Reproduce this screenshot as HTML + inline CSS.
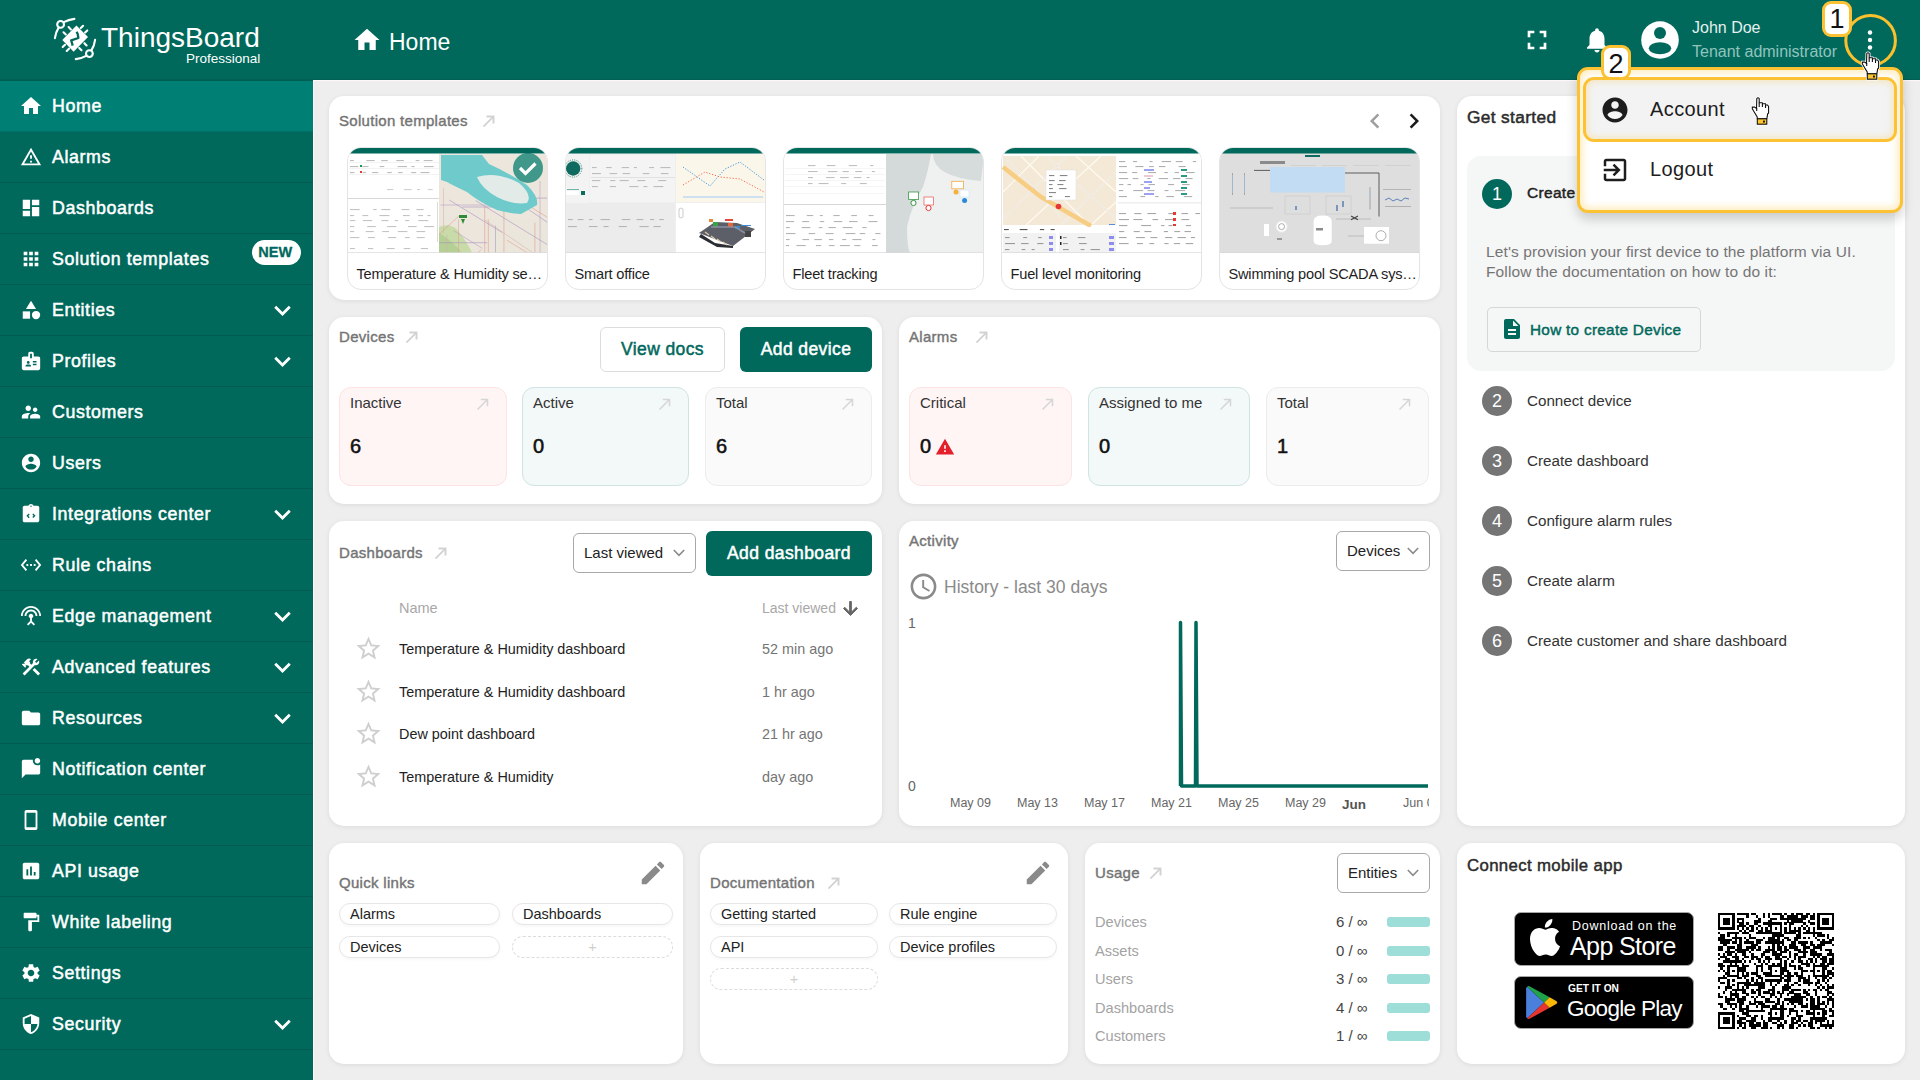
<!DOCTYPE html>
<html><head><meta charset="utf-8">
<style>
*{box-sizing:border-box;margin:0;padding:0}
html,body{width:1920px;height:1080px;overflow:hidden;font-family:"Liberation Sans",sans-serif;background:#eeeeee;position:relative}
.abs{position:absolute}
svg{display:block}
#hdr{position:absolute;left:0;top:0;width:1920px;height:80px;background:#00695c}
#side{position:absolute;left:0;top:80px;width:313px;height:1000px;background:#00695c}
.si{position:absolute;left:0;width:313px;height:52px;border-bottom:1px solid rgba(0,0,0,0.13);color:#fff;font-size:17.8px;font-weight:normal;-webkit-text-stroke:0.5px #fff;letter-spacing:0.62px}
.si.act{background:#008074}
.si svg.ic{position:absolute;left:20px;top:15px;width:22px;height:22px;fill:#fff}
.si span{position:absolute;left:52px;top:16px;line-height:20px;white-space:nowrap}
.si svg.chev{position:absolute;left:265.5px;top:10px;width:33px;height:33px;fill:#fff}
.card{position:absolute;background:#fff;border-radius:15px;box-shadow:0 1px 5px rgba(0,0,0,0.08)}
.newb{position:absolute;left:252px;top:6.5px;width:49px;height:25px;border-radius:13px;background:#fff;color:#00695c;-webkit-text-stroke:0.3px #00695c;letter-spacing:0px;font-size:14.5px;font-weight:bold;text-align:center;line-height:25.5px;padding-right:2.5px}
.ttl{position:absolute;font-size:15px;font-weight:normal;-webkit-text-stroke:0.4px #747474;letter-spacing:0.3px;color:#747474;white-space:nowrap;line-height:18px}
.ttl.dk{color:#2b2b2b}
.arr{position:absolute;width:18px;height:18px;fill:#cfcfcf;stroke:#d6d6d6;stroke-width:0.6}
.txt{position:absolute;white-space:nowrap}
.btn{position:absolute;border-radius:6px;font-size:17.5px;font-weight:normal;-webkit-text-stroke:0.5px currentColor;letter-spacing:0.4px;text-align:center;white-space:nowrap}
.btn.fill{background:#00695c;color:#fff}
.btn.out{background:#fff;color:#00695c;border:1px solid #dcdcdc}
.stat{position:absolute;border-radius:12px;border:1px solid #ececec;background:#fafafa}
.stat.red{background:#fff5f5;border-color:#fde3e3}
.stat.tl{background:#f3f8f8;border-color:#cfe4e2}
.stat .lb{position:absolute;left:10px;top:6px;font-size:15px;line-height:18px;color:#333;white-space:nowrap}
.stat .vl{position:absolute;left:10px;top:45.5px;font-size:20px;line-height:24px;color:#111;-webkit-text-stroke:0.55px #111;white-space:nowrap}
.stat svg{position:absolute;right:14px;top:7px;width:18px;height:18px;fill:#d6d6d6}
.sel{position:absolute;border:1px solid #a8a8a8;border-radius:6px;background:#fff;font-size:15px;color:#222;white-space:nowrap}
.sel span{position:absolute;left:10px;top:50%;transform:translateY(-50%);line-height:18px}
.sel svg{position:absolute;right:10px;top:50%;margin-top:-4px;width:12px;height:8px}
.chip{position:absolute;height:22px;border:1px solid #e6e6e6;border-radius:11px;background:#fff;font-size:14.5px;line-height:20px;color:#222;padding-left:10px;white-space:nowrap;box-shadow:0 2px 3px rgba(0,0,0,0.03)}
.chip.dash{border:1.5px dashed #dcdcdc;color:#cfcfcf;text-align:center;padding-left:0;box-shadow:none}
.tcard{position:absolute;top:147px;width:201px;height:143px;border:1px solid #e4e4e4;border-radius:14px;overflow:hidden;background:#fff}
.tcard > svg{left:-1px!important;top:-1px!important}
.tname{position:absolute;left:8.5px;top:117px;letter-spacing:-0.2px;font-size:14.6px;line-height:18px;color:#1e1e1e;white-space:nowrap}

.si.act svg.ic{left:19px;top:13.5px;width:24px;height:24px}

</style></head><body>
<div id="hdr">
<svg class="abs" style="left:50px;top:14px;width:50px;height:50px" viewBox="0 0 50 50" fill="none" stroke="#fff" stroke-width="2.1" stroke-linecap="round">
<circle cx="10.6" cy="10.4" r="3.4"/><circle cx="39.4" cy="39.6" r="3.4"/>
<path d="M13.8 8.2 Q18.5 5.6 24.4 4.9"/><path d="M8.6 13.6 Q5.6 18.5 4.9 24.2"/>
<path d="M41.4 36.4 Q44.4 31.5 45.1 25.8"/><path d="M36.2 41.8 Q31.5 44.4 25.8 45.1"/>
<path d="M18.6 13.1 L20.9 15.4 M13.5 18.3 L15.8 20.5 M33.1 11.8 L30.8 14.1 M37.3 16.4 L35.1 18.6 M12.7 33.1 L15 30.8 M16.7 37 L19 34.7 M36.6 31.5 L34.4 29.2 M31.5 36.3 L29.2 34"/>
<polygon points="26.4,11.6 38,23.1 23.6,37.7 12.3,25.9" fill="#fff" stroke="none"/>
<path d="M22.7 31.6 L21.2 26.4 L28.4 24 L27.7 20 L26.6 17.8" stroke="#00695c" stroke-width="2.3" stroke-linecap="butt" stroke-linejoin="round"/>
</svg>
<div class="abs" id="tbname" style="left:101px;top:20px;font-size:28px;line-height:36px;color:#fff;white-space:nowrap">ThingsBoard</div>
<div class="abs" id="tbpro" style="left:186px;top:50.5px;font-size:13.5px;line-height:15px;color:#fff;white-space:nowrap">Professional</div>
<svg class="abs" style="left:352px;top:25px;width:30px;height:30px;fill:#fff" viewBox="0 0 24 24"><path d="M10 20v-6h4v6h5v-8h3L12 3 2 12h3v8z"/></svg>
<div class="abs" id="htitle" style="left:389px;top:28.5px;font-size:23px;line-height:26px;color:#fff;white-space:nowrap">Home</div>
<svg class="abs" style="left:1521px;top:24px;width:32px;height:32px;fill:#fff" viewBox="0 0 24 24"><path d="M7 14H5v5h5v-2H7v-3zm-2-4h2V7h3V5H5v5zm12 7h-3v2h5v-5h-2v3zM14 5v2h3v3h2V5h-5z"/></svg>
<svg class="abs" style="left:1582px;top:25px;width:30px;height:30px;fill:#fff" viewBox="0 0 24 24"><path d="M12 22c1.1 0 2-.9 2-2h-4c0 1.1.89 2 2 2zm6-6v-5c0-3.07-1.64-5.64-4.5-6.32V4c0-.83-.67-1.5-1.5-1.5s-1.5.67-1.5 1.5v.68C7.63 5.36 6 7.92 6 11v5l-2 2v1h16v-1l-2-2z"/></svg>
<svg class="abs" style="left:1641px;top:21px;width:38px;height:38px" viewBox="0 0 38 38"><circle cx="19" cy="19" r="18.8" fill="#fff"/><circle cx="19" cy="12.1" r="6" fill="#00695c"/><ellipse cx="19" cy="27.2" rx="11.2" ry="6" fill="#00695c"/></svg>
<div class="abs" id="jd" style="left:1692px;top:18px;font-size:16px;line-height:19px;color:#e6f0ee;white-space:nowrap">John Doe</div>
<div class="abs" id="ta" style="left:1692px;top:42px;font-size:16px;line-height:19px;color:#92c4bc;white-space:nowrap">Tenant administrator</div>
<svg class="abs" style="left:1858px;top:28px;width:24px;height:24px;fill:#fff" viewBox="0 0 24 24"><circle cx="12" cy="4.5" r="2.2"/><circle cx="12" cy="12" r="2.2"/><circle cx="12" cy="19.5" r="2.2"/></svg>
</div>
<div id="side">
<div class="si act" style="top:0px"><svg class="ic" viewBox="0 0 24 24"><path d="M10 20v-6h4v6h5v-8h3L12 3 2 12h3v8z"/></svg><span>Home</span></div>
<div class="si" style="top:51px"><svg class="ic" viewBox="0 0 24 24"><path d="M12 5.99L19.53 19H4.47L12 5.99M12 2L1 21h22L12 2zm1 14h-2v2h2v-2zm0-6h-2v4h2v-4z"/></svg><span>Alarms</span></div>
<div class="si" style="top:102px"><svg class="ic" viewBox="0 0 24 24"><path d="M3 13h8V3H3v10zm0 8h8v-6H3v6zm10 0h8V11h-8v10zm0-18v6h8V3h-8z"/></svg><span>Dashboards</span></div>
<div class="si" style="top:153px"><svg class="ic" viewBox="0 0 24 24"><path d="M4 8h4V4H4v4zm6 12h4v-4h-4v4zm-6 0h4v-4H4v4zm0-6h4v-4H4v4zm6 0h4v-4h-4v4zm6-10v4h4V4h-4zm-6 4h4V4h-4v4zm6 6h4v-4h-4v4zm0 6h4v-4h-4v4z"/></svg><span>Solution templates</span><div class="newb">NEW</div></div>
<div class="si" style="top:204px"><svg class="ic" viewBox="0 0 24 24"><path d="M12 2l-5.5 9h11z"/><circle cx="17.5" cy="17.5" r="4.5"/><path d="M3 13.5h8v8H3z"/></svg><span>Entities</span><svg class="chev" viewBox="0 0 24 24"><path d="M16.59 8.59L12 13.17 7.41 8.59 6 10l6 6 6-6z"/></svg></div>
<div class="si" style="top:255px"><svg class="ic" viewBox="0 0 24 24"><path d="M20 7h-5V4c0-1.1-.9-2-2-2h-2c-1.1 0-2 .9-2 2v3H4c-1.1 0-2 .9-2 2v11c0 1.1.9 2 2 2h16c1.1 0 2-.9 2-2V9c0-1.1-.9-2-2-2zM9 12c.83 0 1.5.67 1.5 1.5S9.83 15 9 15s-1.5-.67-1.5-1.5S8.17 12 9 12zm3 6H6v-.43c0-.6.36-1.15.92-1.39.64-.28 1.34-.43 2.08-.43s1.44.15 2.08.43c.55.24.92.78.92 1.39V18zm1-9h-2V4h2v5zm5 7.5h-4V15h4v1.5zm0-3h-4V12h4v1.5z"/></svg><span>Profiles</span><svg class="chev" viewBox="0 0 24 24"><path d="M16.59 8.59L12 13.17 7.41 8.59 6 10l6 6 6-6z"/></svg></div>
<div class="si" style="top:306px"><svg class="ic" viewBox="0 0 24 24"><path d="M16.5 12c1.38 0 2.49-1.12 2.49-2.5S17.88 7 16.5 7C15.12 7 14 8.12 14 9.5s1.12 2.5 2.5 2.5zM9 11c1.66 0 2.99-1.34 2.99-3S10.66 5 9 5C7.34 5 6 6.34 6 8s1.34 3 3 3zm7.5 3c-1.83 0-5.5.92-5.5 2.75V19h11v-2.25c0-1.83-3.67-2.75-5.5-2.75zM9 13c-2.33 0-7 1.17-7 3.5V19h7v-2.25c0-.85.33-2.34 2.37-3.47C10.5 13.1 9.66 13 9 13z"/></svg><span>Customers</span></div>
<div class="si" style="top:357px"><svg class="ic" viewBox="0 0 24 24"><path d="M12 2C6.48 2 2 6.48 2 12s4.48 10 10 10 10-4.48 10-10S17.52 2 12 2zm0 3c1.66 0 3 1.34 3 3s-1.34 3-3 3-3-1.34-3-3 1.34-3 3-3zm0 14.2c-2.5 0-4.71-1.28-6-3.22.03-1.99 4-3.08 6-3.08 1.99 0 5.97 1.09 6 3.08-1.29 1.94-3.5 3.22-6 3.22z"/></svg><span>Users</span></div>
<div class="si" style="top:408px"><svg class="ic" viewBox="0 0 24 24"><path d="M19 3h-4.18C14.4 1.84 13.3 1 12 1s-2.4.84-2.82 2H5c-1.1 0-2 .9-2 2v14c0 1.1.9 2 2 2h14c1.1 0 2-.9 2-2V5c0-1.1-.9-2-2-2zm-7-.25c.41 0 .75.34.75.75s-.34.75-.75.75-.75-.34-.75-.75.34-.75.75-.75zM9.5 16.5L7 14l2.5-2.5 1.06 1.06L9.12 14l1.44 1.44L9.5 16.5zm5-.06l-1.06-1.06L14.88 14l-1.44-1.44L14.5 11.5 17 14l-2.5 2.44z"/></svg><span>Integrations center</span><svg class="chev" viewBox="0 0 24 24"><path d="M16.59 8.59L12 13.17 7.41 8.59 6 10l6 6 6-6z"/></svg></div>
<div class="si" style="top:459px"><svg class="ic" viewBox="0 0 24 24"><path d="M7.77 6.76L6.23 5.48.82 12l5.41 6.52 1.54-1.28L3.42 12l4.35-5.24zM7 13h2v-2H7v2zm10-2h-2v2h2v-2zm-6 2h2v-2h-2v2zm6.77-7.52l-1.54 1.28L20.58 12l-4.35 5.24 1.54 1.28L23.18 12l-5.41-6.52z"/></svg><span>Rule chains</span></div>
<div class="si" style="top:510px"><svg class="ic" viewBox="0 0 24 24"><path d="M12 5c-3.87 0-7 3.13-7 7h2c0-2.76 2.24-5 5-5s5 2.24 5 5h2c0-3.87-3.13-7-7-7zm1 9.29c.88-.39 1.5-1.26 1.5-2.29 0-1.38-1.12-2.5-2.5-2.5S9.5 10.62 9.5 12c0 1.02.62 1.9 1.5 2.29v3.3L7.59 21 9 22.41l3-3 3 3L16.41 21 13 17.59v-3.3zM12 1C5.93 1 1 5.93 1 12h2c0-4.97 4.03-9 9-9s9 4.03 9 9h2c0-6.07-4.93-11-11-11z"/></svg><span>Edge management</span><svg class="chev" viewBox="0 0 24 24"><path d="M16.59 8.59L12 13.17 7.41 8.59 6 10l6 6 6-6z"/></svg></div>
<div class="si" style="top:561px"><svg class="ic" viewBox="0 0 24 24"><path d="M13.78 15.17l2.12-2.12 6 6-2.12 2.12zM17.5 10c1.93 0 3.5-1.57 3.5-3.5 0-.58-.16-1.12-.41-1.6l-2.7 2.7-1.49-1.49 2.7-2.7c-.48-.25-1.02-.41-1.6-.41C15.57 3 14 4.57 14 6.5c0 .41.08.8.21 1.16l-1.85 1.85-1.78-1.78.71-.71-1.41-1.41L12 3.49c-1.17-1.17-3.07-1.17-4.24 0L4.22 7.03l1.41 1.41H2.81l-.71.71 3.54 3.54.71-.71V9.15l1.41 1.41.71-.71 1.78 1.78-7.41 7.41 2.12 2.12L16.34 9.79c.36.13.75.21 1.16.21z"/></svg><span>Advanced features</span><svg class="chev" viewBox="0 0 24 24"><path d="M16.59 8.59L12 13.17 7.41 8.59 6 10l6 6 6-6z"/></svg></div>
<div class="si" style="top:612px"><svg class="ic" viewBox="0 0 24 24"><path d="M10 4H4c-1.1 0-1.99.9-1.99 2L2 18c0 1.1.9 2 2 2h16c1.1 0 2-.9 2-2V8c0-1.1-.9-2-2-2h-8l-2-2z"/></svg><span>Resources</span><svg class="chev" viewBox="0 0 24 24"><path d="M16.59 8.59L12 13.17 7.41 8.59 6 10l6 6 6-6z"/></svg></div>
<div class="si" style="top:663px"><svg class="ic" viewBox="0 0 24 24"><path d="M22 6.98V16c0 1.1-.9 2-2 2H6l-4 4V4c0-1.1.9-2 2-2h10.1c-.06.32-.1.66-.1 1 0 2.76 2.24 5 5 5 1.13 0 2.16-.39 3-1.02zM16 3c0 1.66 1.34 3 3 3s3-1.34 3-3-1.34-3-3-3-3 1.34-3 3z"/></svg><span>Notification center</span></div>
<div class="si" style="top:714px"><svg class="ic" viewBox="0 0 24 24"><path d="M17 1.01L7 1c-1.1 0-2 .9-2 2v18c0 1.1.9 2 2 2h10c1.1 0 2-.9 2-2V3c0-1.1-.9-1.99-2-1.99zM17 20H7V4h10v16z"/></svg><span>Mobile center</span></div>
<div class="si" style="top:765px"><svg class="ic" viewBox="0 0 24 24"><path d="M19 3H5c-1.1 0-2 .9-2 2v14c0 1.1.9 2 2 2h14c1.1 0 2-.9 2-2V5c0-1.1-.9-2-2-2zM9 17H7v-7h2v7zm4 0h-2V7h2v10zm4 0h-2v-4h2v4z"/></svg><span>API usage</span></div>
<div class="si" style="top:816px"><svg class="ic" viewBox="0 0 24 24"><path d="M18 4V3c0-.55-.45-1-1-1H5c-.55 0-1 .45-1 1v4c0 .55.45 1 1 1h12c.55 0 1-.45 1-1V6h1v4H9v11c0 .55.45 1 1 1h2c.55 0 1-.45 1-1v-9h8V4h-3z"/></svg><span>White labeling</span></div>
<div class="si" style="top:867px"><svg class="ic" viewBox="0 0 24 24"><path d="M19.14 12.94c.04-.3.06-.61.06-.94 0-.32-.02-.64-.07-.94l2.03-1.58c.18-.14.23-.41.12-.61l-1.92-3.32c-.12-.22-.37-.29-.59-.22l-2.39.96c-.5-.38-1.03-.7-1.62-.94l-.36-2.54c-.04-.24-.24-.41-.48-.41h-3.84c-.24 0-.43.17-.47.41l-.36 2.54c-.59.24-1.13.57-1.62.94l-2.39-.96c-.22-.08-.47 0-.59.22L2.74 8.87c-.12.21-.08.47.12.61l2.03 1.58c-.05.3-.09.63-.09.94s.02.64.07.94l-2.03 1.58c-.18.14-.23.41-.12.61l1.92 3.32c.12.22.37.29.59.22l2.39-.96c.5.38 1.03.7 1.62.94l.36 2.54c.05.24.24.41.48.41h3.84c.24 0 .44-.17.47-.41l.36-2.54c.59-.24 1.13-.56 1.62-.94l2.39.96c.22.08.47 0 .59-.22l1.92-3.32c.12-.22.07-.47-.12-.61l-2.01-1.58zM12 15.6c-1.98 0-3.6-1.62-3.6-3.6s1.62-3.6 3.6-3.6 3.6 1.62 3.6 3.6-1.62 3.6-3.6 3.6z"/></svg><span>Settings</span></div>
<div class="si" style="top:918px"><svg class="ic" viewBox="0 0 24 24"><path d="M12 1L3 5v6c0 5.55 3.84 10.74 9 12 5.16-1.26 9-6.45 9-12V5l-9-4zm0 10.99h7c-.53 4.12-3.28 7.79-7 8.94V12H5V6.3l7-3.11v8.8z"/></svg><span>Security</span><svg class="chev" viewBox="0 0 24 24"><path d="M16.59 8.59L12 13.17 7.41 8.59 6 10l6 6 6-6z"/></svg></div>
</div>
<div class="abs" style="left:0;top:79px;width:1920px;height:1px;background:rgba(0,0,0,0.10)"></div>
<div class="abs" style="left:0;top:80px;width:313px;height:1px;background:#005f53"></div>
<div class="abs" style="left:313px;top:80px;width:1607px;height:1px;background:#fdf7f7"></div>
<div class="abs" style="left:313px;top:80px;width:1px;height:1000px;background:#fdf7f7"></div>
<div class="card" style="left:329px;top:96px;width:1111px;height:204px"></div>
<div class="card" style="left:1457px;top:96px;width:448px;height:730px"></div>
<div class="card" style="left:329px;top:317px;width:553px;height:187px"></div>
<div class="card" style="left:899px;top:317px;width:541px;height:187px"></div>
<div class="card" style="left:329px;top:521px;width:553px;height:305px"></div>
<div class="card" style="left:899px;top:521px;width:541px;height:305px"></div>
<div class="card" style="left:329px;top:843px;width:354px;height:221px"></div>
<div class="card" style="left:700px;top:843px;width:368px;height:221px"></div>
<div class="card" style="left:1085px;top:843px;width:355px;height:221px"></div>
<div class="card" style="left:1457px;top:843px;width:448px;height:221px"></div>
<div class="ttl" style="left:339px;top:112px">Solution templates</div>
<svg class="arr" viewBox="0 0 24 24" style="left:480px;top:111.75px;fill:#d0d0d0"><path d="M9 5v2h6.59L4 18.59 5.41 20 17 8.41V15h2V5z"/></svg>
<svg class="abs" style="left:1359.5px;top:105.5px;width:30px;height:30px;fill:#9e9e9e" viewBox="0 0 24 24"><path d="M15.41 7.41L14 6l-6 6 6 6 1.41-1.41L10.83 12z"/></svg>
<svg class="abs" style="left:1398.5px;top:105.5px;width:30px;height:30px;fill:#1a1a1a" viewBox="0 0 24 24"><path d="M10 6L8.59 7.41 13.17 12l-4.58 4.59L10 18l6-6z"/></svg>
<div class="tcard" style="left:347px"><svg class="abs" style="left:0;top:0;width:201px;height:106px" viewBox="0 0 201 106"><clipPath id="tc0"><rect x="0" y="0" width="201" height="106"/></clipPath><g clip-path="url(#tc0)"><rect x="0" y="6" width="201" height="100" fill="#fff"/><rect x="2" y="15" width="90" height="0.6" fill="#ececec"/><rect x="2" y="21" width="90" height="0.6" fill="#ececec"/><rect x="2" y="27" width="90" height="0.6" fill="#ececec"/><rect x="3.0" y="13" width="3.9" height="1.1" fill="#bdbdbd"/><rect x="19.4" y="13" width="8.3" height="1.1" fill="#bdbdbd"/><rect x="34.3" y="13" width="6.5" height="1.1" fill="#bdbdbd"/><rect x="49.3" y="13" width="7.6" height="1.1" fill="#bdbdbd"/><rect x="68.7" y="13" width="3.7" height="1.1" fill="#bdbdbd"/><rect x="76.7" y="13" width="8.9" height="1.1" fill="#bdbdbd"/><rect x="3.0" y="19" width="8.3" height="1.1" fill="#bdbdbd"/><rect x="15.4" y="19" width="6.1" height="1.1" fill="#bdbdbd"/><rect x="32.7" y="19" width="4.6" height="1.1" fill="#bdbdbd"/><rect x="50.7" y="19" width="9.3" height="1.1" fill="#bdbdbd"/><rect x="64.4" y="19" width="3.2" height="1.1" fill="#bdbdbd"/><rect x="77.0" y="19" width="9.6" height="1.1" fill="#bdbdbd"/><rect x="3.0" y="25" width="4.5" height="1.1" fill="#bdbdbd"/><rect x="15.7" y="25" width="3.2" height="1.1" fill="#bdbdbd"/><rect x="25.2" y="25" width="6.1" height="1.1" fill="#bdbdbd"/><rect x="40.2" y="25" width="4.6" height="1.1" fill="#bdbdbd"/><rect x="51.1" y="25" width="4.5" height="1.1" fill="#bdbdbd"/><rect x="64.2" y="25" width="5.0" height="1.1" fill="#bdbdbd"/><rect x="73.5" y="25" width="8.9" height="1.1" fill="#bdbdbd"/><rect x="13" y="18" width="2" height="2" fill="#1a9a3a"/><rect x="13" y="24" width="2" height="2" fill="#e53935"/><rect x="40.0" y="42" width="6.3" height="1.1" fill="#d0d0d0"/><rect x="56.9" y="42" width="7.7" height="1.1" fill="#d0d0d0"/><rect x="70.0" y="42" width="3.1" height="1.1" fill="#d0d0d0"/><rect x="80.8" y="42" width="4.9" height="1.1" fill="#d0d0d0"/><rect x="0" y="51" width="93" height="1" fill="#d8d8d8"/><rect x="3.0" y="62" width="9.7" height="1.1" fill="#c4c4c4"/><rect x="26.2" y="62" width="3.4" height="1.1" fill="#c4c4c4"/><rect x="34.4" y="62" width="8.8" height="1.1" fill="#c4c4c4"/><rect x="54.6" y="62" width="7.7" height="1.1" fill="#c4c4c4"/><rect x="69.4" y="62" width="7.2" height="1.1" fill="#c4c4c4"/><rect x="3.0" y="68" width="4.1" height="1.1" fill="#c4c4c4"/><rect x="15.4" y="68" width="5.8" height="1.1" fill="#c4c4c4"/><rect x="32.4" y="68" width="10.0" height="1.1" fill="#c4c4c4"/><rect x="55.9" y="68" width="6.8" height="1.1" fill="#c4c4c4"/><rect x="71.1" y="68" width="4.9" height="1.1" fill="#c4c4c4"/><rect x="80.4" y="68" width="3.2" height="1.1" fill="#c4c4c4"/><rect x="3.0" y="73" width="5.2" height="1.1" fill="#c4c4c4"/><rect x="16.0" y="73" width="9.2" height="1.1" fill="#c4c4c4"/><rect x="34.5" y="73" width="6.9" height="1.1" fill="#c4c4c4"/><rect x="47.8" y="73" width="3.2" height="1.1" fill="#c4c4c4"/><rect x="58.2" y="73" width="4.0" height="1.1" fill="#c4c4c4"/><rect x="71.3" y="73" width="10.0" height="1.1" fill="#c4c4c4"/><rect x="3.0" y="79" width="4.3" height="1.1" fill="#c4c4c4"/><rect x="20.2" y="79" width="8.6" height="1.1" fill="#c4c4c4"/><rect x="40.1" y="79" width="9.3" height="1.1" fill="#c4c4c4"/><rect x="61.1" y="79" width="8.5" height="1.1" fill="#c4c4c4"/><rect x="77.2" y="79" width="9.9" height="1.1" fill="#c4c4c4"/><rect x="3.0" y="84" width="4.1" height="1.1" fill="#c4c4c4"/><rect x="18.7" y="84" width="8.0" height="1.1" fill="#c4c4c4"/><rect x="35.3" y="84" width="6.7" height="1.1" fill="#c4c4c4"/><rect x="50.9" y="84" width="9.5" height="1.1" fill="#c4c4c4"/><rect x="69.4" y="84" width="8.8" height="1.1" fill="#c4c4c4"/><rect x="3.0" y="90" width="9.3" height="1.1" fill="#c4c4c4"/><rect x="20.9" y="90" width="7.0" height="1.1" fill="#c4c4c4"/><rect x="41.1" y="90" width="8.1" height="1.1" fill="#c4c4c4"/><rect x="58.0" y="90" width="4.6" height="1.1" fill="#c4c4c4"/><rect x="69.8" y="90" width="7.9" height="1.1" fill="#c4c4c4"/><rect x="3.0" y="101" width="4.9" height="1.1" fill="#c4c4c4"/><rect x="21.0" y="101" width="5.2" height="1.1" fill="#c4c4c4"/><rect x="39.7" y="101" width="7.9" height="1.1" fill="#c4c4c4"/><rect x="56.7" y="101" width="6.6" height="1.1" fill="#c4c4c4"/><rect x="73.9" y="101" width="7.1" height="1.1" fill="#c4c4c4"/><rect x="90" y="55" width="1" height="40" fill="#dcdcdc"/><rect x="92" y="7" width="109" height="99" fill="#ece6dc"/><path d="M92 80 Q105 75 112 85 Q122 98 125 106 H92Z" fill="#c9dba8"/><path d="M92 86 Q100 90 110 100 L115 106 H92Z" fill="#b6cf94"/><clipPath id="mapc1"><rect x="92" y="7" width="109" height="99"/></clipPath><g clip-path="url(#mapc1)"><path d="M141.3 72.5 L141.4 129.7" stroke="#e49a8a" stroke-width="0.7" opacity="0.8"/><path d="M112.1 68.9 L62.8 114.1" stroke="#e49a8a" stroke-width="0.7" opacity="0.8"/><path d="M102.3 53.1 L155.4 85.6" stroke="#a58fc0" stroke-width="0.7" opacity="0.8"/><path d="M156.9 60.1 L157.0 129.3" stroke="#e49a8a" stroke-width="0.7" opacity="0.8"/><path d="M159.9 93.2 L188.5 110.8" stroke="#e49a8a" stroke-width="0.7" opacity="0.8"/><path d="M187.9 75.6 L187.9 125.1" stroke="#e49a8a" stroke-width="0.7" opacity="0.8"/><path d="M148.6 78.7 L148.6 108.9" stroke="#a58fc0" stroke-width="0.7" opacity="0.8"/><path d="M141.8 51.1 L231.6 51.1" stroke="#a58fc0" stroke-width="0.7" opacity="0.8"/><path d="M169.2 54.0 L219.3 88.3" stroke="#a58fc0" stroke-width="0.7" opacity="0.8"/><path d="M99.7 88.2 L99.7 124.7" stroke="#d9b0b0" stroke-width="0.7" opacity="0.8"/><path d="M134.1 102.8 L112.0 123.1" stroke="#e49a8a" stroke-width="0.7" opacity="0.8"/><path d="M193.0 34.0 L193.1 122.8" stroke="#b7a0c8" stroke-width="0.7" opacity="0.8"/><path d="M137.8 73.0 L201.1 116.3" stroke="#d9b0b0" stroke-width="0.7" opacity="0.8"/><path d="M128.7 53.7 L203.6 99.6" stroke="#a58fc0" stroke-width="0.7" opacity="0.8"/><path d="M106.7 83.7 L135.3 101.3" stroke="#b7a0c8" stroke-width="0.7" opacity="0.8"/><path d="M111.4 72.5 L111.4 133.0" stroke="#e49a8a" stroke-width="0.7" opacity="0.8"/><path d="M137.7 59.2 L137.7 114.4" stroke="#e49a8a" stroke-width="0.7" opacity="0.8"/><path d="M92.1 95.7 L140.3 95.7" stroke="#a58fc0" stroke-width="0.7" opacity="0.8"/><path d="M115.0 60.0 L183.5 60.0" stroke="#a58fc0" stroke-width="0.7" opacity="0.8"/><path d="M96.6 41.1 L96.6 86.6" stroke="#d9b0b0" stroke-width="0.7" opacity="0.8"/><path d="M182.5 59.3 L212.7 77.9" stroke="#e49a8a" stroke-width="0.7" opacity="0.8"/><path d="M93.7 58.0 L150.9 58.0" stroke="#b7a0c8" stroke-width="0.7" opacity="0.8"/></g><path d="M94 8 H135 L142 17 Q160 25 180 38 Q192 50 190 58 L174 67 Q160 66 150 63 Q132 55 120 45 Q105 38 100 35 L94 33 Z" fill="#6fcbcb"/><path d="M130 30 Q150 24 172 36 Q186 48 180 56 Q165 58 150 50 Q135 42 130 30Z" fill="#e2ebe8"/><rect x="112" y="68" width="8" height="3" fill="#2e8b3a"/><path d="M114 72 l2 5 l2-5z" fill="#2e8b3a"/><circle cx="181" cy="21" r="15" fill="#2e8f82" opacity="0.9"/><path d="M173 21 l5.5 5.5 l10-10" stroke="#fff" stroke-width="3.2" fill="none"/><rect x="0" y="0" width="201" height="6.5" fill="#00695c"/><rect x="0" y="105.3" width="201" height="0.7" fill="#d9d9d9"/></g></svg><div class="tname">Temperature &amp; Humidity se&#8230;</div></div>
<div class="tcard" style="left:565px"><svg class="abs" style="left:0;top:0;width:201px;height:106px" viewBox="0 0 201 106"><clipPath id="tc1"><rect x="0" y="0" width="201" height="106"/></clipPath><g clip-path="url(#tc1)"><rect x="0" y="6" width="201" height="100" fill="#efefef"/><rect x="0" y="7" width="24" height="49" fill="#f3f3f3"/><circle cx="8.2" cy="21.5" r="7.2" fill="#0f6b5f"/><circle cx="8.2" cy="21.5" r="8.6" fill="none" stroke="#0f6b5f" stroke-width="0.9" stroke-dasharray="0.9 1.4"/><rect x="1" y="44" width="13" height="4" fill="#fff"/><rect x="16" y="44" width="4" height="4" fill="#0f6b5f"/><rect x="2" y="42" width="12" height="0.7" fill="#3a9a8a"/><rect x="25" y="8" width="85" height="47" fill="#f4f4f4"/><rect x="26" y="30" width="84" height="0.6" fill="#d4d4d4"/><rect x="27.0" y="20" width="4.7" height="1.1" fill="#bdbdbd"/><rect x="41.1" y="20" width="5.6" height="1.1" fill="#bdbdbd"/><rect x="56.7" y="20" width="7.4" height="1.1" fill="#bdbdbd"/><rect x="68.8" y="20" width="3.1" height="1.1" fill="#bdbdbd"/><rect x="84.2" y="20" width="4.8" height="1.1" fill="#bdbdbd"/><rect x="95.4" y="20" width="10.0" height="1.1" fill="#bdbdbd"/><rect x="27.0" y="26" width="8.9" height="1.1" fill="#bdbdbd"/><rect x="44.6" y="26" width="7.5" height="1.1" fill="#bdbdbd"/><rect x="57.6" y="26" width="7.4" height="1.1" fill="#bdbdbd"/><rect x="77.7" y="26" width="6.7" height="1.1" fill="#bdbdbd"/><rect x="95.8" y="26" width="7.7" height="1.1" fill="#bdbdbd"/><rect x="27.0" y="33" width="8.3" height="1.1" fill="#bdbdbd"/><rect x="45.2" y="33" width="5.1" height="1.1" fill="#bdbdbd"/><rect x="54.6" y="33" width="9.1" height="1.1" fill="#bdbdbd"/><rect x="72.4" y="33" width="8.0" height="1.1" fill="#bdbdbd"/><rect x="93.2" y="33" width="8.0" height="1.1" fill="#bdbdbd"/><rect x="27.0" y="39" width="5.8" height="1.1" fill="#bdbdbd"/><rect x="44.8" y="39" width="6.1" height="1.1" fill="#bdbdbd"/><rect x="64.2" y="39" width="9.2" height="1.1" fill="#bdbdbd"/><rect x="78.4" y="39" width="4.0" height="1.1" fill="#bdbdbd"/><rect x="88.5" y="39" width="9.8" height="1.1" fill="#bdbdbd"/><rect x="111" y="7" width="90" height="48" fill="#fbf6ea"/><path d="M118 20 L145 39 L160 22 L175 15 L199 33" stroke="#3d95dd" stroke-width="1" stroke-dasharray="1.2 1.6" fill="none"/><path d="M118 38 L140 25 L155 30 L175 32 L199 45" stroke="#ef6a4a" stroke-width="1" stroke-dasharray="1.2 1.8" fill="none"/><rect x="118" y="49" width="80" height="2" fill="#cfe0f0"/><rect x="0" y="56" width="110" height="50" fill="#ececec"/><rect x="3.0" y="72" width="4.7" height="1.1" fill="#b5b5b5"/><rect x="12.7" y="72" width="5.8" height="1.1" fill="#b5b5b5"/><rect x="24.0" y="72" width="3.5" height="1.1" fill="#b5b5b5"/><rect x="35.5" y="72" width="9.4" height="1.1" fill="#b5b5b5"/><rect x="56.9" y="72" width="8.4" height="1.1" fill="#b5b5b5"/><rect x="71.5" y="72" width="6.8" height="1.1" fill="#b5b5b5"/><rect x="85.0" y="72" width="4.2" height="1.1" fill="#b5b5b5"/><rect x="94.3" y="72" width="4.5" height="1.1" fill="#b5b5b5"/><rect x="3.0" y="79" width="8.8" height="1.1" fill="#b5b5b5"/><rect x="23.9" y="79" width="8.6" height="1.1" fill="#b5b5b5"/><rect x="38.4" y="79" width="5.2" height="1.1" fill="#b5b5b5"/><rect x="53.8" y="79" width="8.1" height="1.1" fill="#b5b5b5"/><rect x="74.5" y="79" width="9.2" height="1.1" fill="#b5b5b5"/><rect x="88.5" y="79" width="7.2" height="1.1" fill="#b5b5b5"/><rect x="111" y="56" width="90" height="50" fill="#fff"/><path d="M134 86 L150 75 L172 76 L190 82 L168 99 Z" fill="#5d5f68"/><path d="M136 87 L150 96 L152 100 L134 90Z M150 96 L168 99 L168 101 L152 100Z" fill="#2b2d33"/><path d="M140 85 l4 3 M146 89 l4 3 M152 92 l4 3 M158 95 l4 3" stroke="#d9c7a8" stroke-width="1.2"/><rect x="148" y="75" width="5" height="5" fill="#3aa04a"/><rect x="144" y="72" width="4" height="3" fill="#e8863a"/><rect x="160" y="72" width="8" height="2" fill="#e8463a"/><rect x="163" y="76" width="5" height="4" fill="#e8663a"/><rect x="170" y="79" width="5" height="3" fill="#3a8ad8"/><rect x="176" y="78" width="10" height="1" fill="#3a8ad8"/><rect x="180" y="84" width="6" height="6" fill="#444"/><path d="M146 80 L170 80 L180 86" stroke="#8a8fa0" stroke-width="1.5" fill="none"/><path d="M114 62 Q116 60 118 62 V70 Q116 72 114 70Z" fill="none" stroke="#999" stroke-width="0.5"/><rect x="0" y="0" width="201" height="6.5" fill="#00695c"/><rect x="0" y="105.3" width="201" height="0.7" fill="#d9d9d9"/></g></svg><div class="tname">Smart office</div></div>
<div class="tcard" style="left:783px"><svg class="abs" style="left:0;top:0;width:201px;height:106px" viewBox="0 0 201 106"><clipPath id="tc2"><rect x="0" y="0" width="201" height="106"/></clipPath><g clip-path="url(#tc2)"><rect x="0" y="6" width="201" height="100" fill="#fff"/><rect x="2" y="21" width="100" height="0.6" fill="#eeeeee"/><rect x="2" y="27" width="100" height="0.6" fill="#eeeeee"/><rect x="2" y="33" width="100" height="0.6" fill="#eeeeee"/><rect x="2" y="39" width="100" height="0.6" fill="#eeeeee"/><rect x="2" y="46" width="100" height="0.6" fill="#eeeeee"/><rect x="25.0" y="18" width="7.4" height="1.1" fill="#c0c0c0"/><rect x="43.8" y="18" width="8.6" height="1.1" fill="#c0c0c0"/><rect x="65.8" y="18" width="8.2" height="1.1" fill="#c0c0c0"/><rect x="87.2" y="18" width="3.2" height="1.1" fill="#c0c0c0"/><rect x="25.0" y="24" width="9.6" height="1.1" fill="#c0c0c0"/><rect x="45.1" y="24" width="9.3" height="1.1" fill="#c0c0c0"/><rect x="59.5" y="24" width="6.3" height="1.1" fill="#c0c0c0"/><rect x="72.3" y="24" width="6.8" height="1.1" fill="#c0c0c0"/><rect x="88.8" y="24" width="3.1" height="1.1" fill="#c0c0c0"/><rect x="25.0" y="30" width="5.0" height="1.1" fill="#c0c0c0"/><rect x="43.1" y="30" width="8.4" height="1.1" fill="#c0c0c0"/><rect x="57.1" y="30" width="8.6" height="1.1" fill="#c0c0c0"/><rect x="71.0" y="30" width="7.3" height="1.1" fill="#c0c0c0"/><rect x="83.6" y="30" width="3.0" height="1.1" fill="#c0c0c0"/><rect x="25.0" y="36" width="4.5" height="1.1" fill="#c0c0c0"/><rect x="35.6" y="36" width="9.9" height="1.1" fill="#c0c0c0"/><rect x="58.2" y="36" width="5.0" height="1.1" fill="#c0c0c0"/><rect x="76.9" y="36" width="6.8" height="1.1" fill="#c0c0c0"/><rect x="0" y="57" width="103" height="1" fill="#d6d6d6"/><rect x="3.0" y="68" width="8.6" height="1.1" fill="#b5b5b5"/><rect x="23.8" y="68" width="6.4" height="1.1" fill="#b5b5b5"/><rect x="36.8" y="68" width="3.0" height="1.1" fill="#b5b5b5"/><rect x="50.4" y="68" width="6.3" height="1.1" fill="#b5b5b5"/><rect x="68.3" y="68" width="5.6" height="1.1" fill="#b5b5b5"/><rect x="85.6" y="68" width="4.9" height="1.1" fill="#b5b5b5"/><rect x="3.0" y="74" width="8.1" height="1.1" fill="#b5b5b5"/><rect x="19.2" y="74" width="6.8" height="1.1" fill="#b5b5b5"/><rect x="36.8" y="74" width="4.4" height="1.1" fill="#b5b5b5"/><rect x="50.7" y="74" width="8.6" height="1.1" fill="#b5b5b5"/><rect x="66.0" y="74" width="8.6" height="1.1" fill="#b5b5b5"/><rect x="85.5" y="74" width="8.9" height="1.1" fill="#b5b5b5"/><rect x="3.0" y="80" width="3.7" height="1.1" fill="#b5b5b5"/><rect x="18.7" y="80" width="8.6" height="1.1" fill="#b5b5b5"/><rect x="35.7" y="80" width="3.7" height="1.1" fill="#b5b5b5"/><rect x="45.4" y="80" width="7.4" height="1.1" fill="#b5b5b5"/><rect x="59.7" y="80" width="9.7" height="1.1" fill="#b5b5b5"/><rect x="79.3" y="80" width="4.4" height="1.1" fill="#b5b5b5"/><rect x="3.0" y="86" width="9.5" height="1.1" fill="#b5b5b5"/><rect x="25.6" y="86" width="6.6" height="1.1" fill="#b5b5b5"/><rect x="42.7" y="86" width="7.9" height="1.1" fill="#b5b5b5"/><rect x="62.6" y="86" width="9.8" height="1.1" fill="#b5b5b5"/><rect x="76.7" y="86" width="5.5" height="1.1" fill="#b5b5b5"/><rect x="92.3" y="86" width="5.1" height="1.1" fill="#b5b5b5"/><rect x="3.0" y="92" width="3.6" height="1.1" fill="#b5b5b5"/><rect x="19.4" y="92" width="6.7" height="1.1" fill="#b5b5b5"/><rect x="31.3" y="92" width="7.6" height="1.1" fill="#b5b5b5"/><rect x="46.0" y="92" width="4.4" height="1.1" fill="#b5b5b5"/><rect x="59.2" y="92" width="4.0" height="1.1" fill="#b5b5b5"/><rect x="69.3" y="92" width="9.1" height="1.1" fill="#b5b5b5"/><rect x="89.4" y="92" width="3.1" height="1.1" fill="#b5b5b5"/><rect x="3.0" y="98" width="3.1" height="1.1" fill="#b5b5b5"/><rect x="13.4" y="98" width="9.3" height="1.1" fill="#b5b5b5"/><rect x="33.0" y="98" width="5.1" height="1.1" fill="#b5b5b5"/><rect x="45.9" y="98" width="5.7" height="1.1" fill="#b5b5b5"/><rect x="56.9" y="98" width="10.0" height="1.1" fill="#b5b5b5"/><rect x="71.4" y="98" width="6.0" height="1.1" fill="#b5b5b5"/><rect x="88.9" y="98" width="5.8" height="1.1" fill="#b5b5b5"/><rect x="103" y="7" width="98" height="99" fill="#eef1f0"/><path d="M103 7 H148 Q145 25 140 40 Q128 60 124 80 Q124 100 127 106 H103Z" fill="#d4d9d9"/><path d="M103 7 H150 Q150 30 198 34 L201 7Z" fill="#d6dbdb"/><rect x="125.6" y="45" width="10" height="7.4" fill="#fff" stroke="#3a9a4a" stroke-width="0.8"/><circle cx="130.5" cy="56" r="2.6" fill="#fff" stroke="#3a9a4a" stroke-width="1"/><rect x="141" y="50" width="9.6" height="8" fill="#fff" stroke="#e53935" stroke-width="0.6"/><circle cx="145.5" cy="61" r="2.6" fill="#fff" stroke="#e53935" stroke-width="1"/><rect x="168.8" y="34.3" width="11.7" height="7.5" fill="#fff" stroke="#f4a742" stroke-width="0.8"/><circle cx="173" cy="45" r="2.5" fill="#f4b13a"/><rect x="177" y="43" width="9" height="7" fill="#fff" stroke="#bfe0f5" stroke-width="0.5"/><circle cx="181.6" cy="53.5" r="2.5" fill="#2a8ad8"/><rect x="102" y="7" width="99" height="99" fill="none"/><rect x="0" y="0" width="201" height="6.5" fill="#00695c"/><rect x="0" y="105.3" width="201" height="0.7" fill="#d9d9d9"/></g></svg><div class="tname">Fleet tracking</div></div>
<div class="tcard" style="left:1001px"><svg class="abs" style="left:0;top:0;width:201px;height:106px" viewBox="0 0 201 106"><clipPath id="tc3"><rect x="0" y="0" width="201" height="106"/></clipPath><g clip-path="url(#tc3)"><rect x="0" y="6" width="201" height="100" fill="#fff"/><rect x="2" y="9" width="113" height="69" fill="#f4e9d6"/><path d="M6 12 L60 70 M20 9 L88 78 M45 9 L115 72 M75 9 L115 45 M2 45 L38 9 M2 72 L66 9 M25 78 L100 9 M60 78 L115 25 M90 78 L115 55" stroke="#fffaf0" stroke-width="1.2" fill="none"/><path d="M6 12 L60 70 M45 9 L115 72 M2 72 L66 9 M60 78 L115 25" stroke="#c6c0d2" stroke-width="0.4" fill="none"/><path d="M2 20 L40 50 L90 79" stroke="#f6cd83" stroke-width="4.5" fill="none"/><rect x="45" y="23" width="30" height="30" fill="#fff" stroke="#ddd" stroke-width="0.5"/><rect x="48.0" y="28" width="5.3" height="1.1" fill="#888"/><rect x="58.8" y="28" width="7.6" height="1.1" fill="#888"/><rect x="48.0" y="33" width="5.6" height="1.1" fill="#888"/><rect x="58.1" y="33" width="6.6" height="1.1" fill="#888"/><rect x="48.0" y="37" width="3.5" height="1.1" fill="#888"/><rect x="56.4" y="37" width="6.0" height="1.1" fill="#888"/><rect x="48.0" y="41" width="3.9" height="1.1" fill="#888"/><rect x="58.1" y="41" width="7.4" height="1.1" fill="#888"/><rect x="48.0" y="45" width="7.0" height="1.1" fill="#888"/><rect x="48.0" y="49" width="3.3" height="1.1" fill="#888"/><rect x="63.9" y="49" width="5.0" height="1.1" fill="#888"/><circle cx="57.5" cy="59.5" r="2.8" fill="#e53935"/><rect x="108" y="77" width="6" height="1" fill="#5a8adc"/><rect x="2" y="80" width="113" height="5" fill="#fff"/><rect x="3.0" y="82" width="4.8" height="1.1" fill="#555"/><rect x="18.7" y="82" width="7.8" height="1.1" fill="#555"/><rect x="38.9" y="82" width="4.3" height="1.1" fill="#555"/><rect x="49.6" y="82" width="4.0" height="1.1" fill="#555"/><rect x="2" y="86" width="53" height="20" fill="#f2f2f2"/><rect x="58" y="86" width="57" height="20" fill="#f2f2f2"/><rect x="4.0" y="90" width="4.6" height="1.1" fill="#9a9a9a"/><rect x="22.2" y="90" width="3.9" height="1.1" fill="#9a9a9a"/><rect x="37.1" y="90" width="3.6" height="1.1" fill="#9a9a9a"/><rect x="4.0" y="96" width="10.0" height="1.1" fill="#9a9a9a"/><rect x="20.1" y="96" width="7.5" height="1.1" fill="#9a9a9a"/><rect x="36.2" y="96" width="6.2" height="1.1" fill="#9a9a9a"/><rect x="4.0" y="102" width="4.3" height="1.1" fill="#9a9a9a"/><rect x="20.7" y="102" width="3.6" height="1.1" fill="#9a9a9a"/><rect x="30.6" y="102" width="3.1" height="1.1" fill="#9a9a9a"/><rect x="62.0" y="90" width="3.7" height="1.1" fill="#9a9a9a"/><rect x="76.8" y="90" width="7.6" height="1.1" fill="#9a9a9a"/><rect x="62.0" y="96" width="4.8" height="1.1" fill="#9a9a9a"/><rect x="78.1" y="96" width="7.6" height="1.1" fill="#9a9a9a"/><rect x="62.0" y="102" width="5.8" height="1.1" fill="#9a9a9a"/><rect x="79.6" y="102" width="3.8" height="1.1" fill="#9a9a9a"/><rect x="89.6" y="102" width="9.3" height="1.1" fill="#9a9a9a"/><rect x="48" y="89" width="4" height="3" fill="#8d8df0"/><rect x="48" y="95" width="4" height="3" fill="#8d8df0"/><rect x="48" y="101" width="4" height="3" fill="#8d8df0"/><rect x="108" y="89" width="5" height="3" fill="#8d8df0"/><rect x="108" y="95" width="5" height="3" fill="#8d8df0"/><rect x="108" y="101" width="5" height="3" fill="#8d8df0"/><rect x="59" y="89" width="1.5" height="3" fill="#222"/><rect x="59" y="95" width="1.5" height="3" fill="#222"/><rect x="117" y="55" width="84" height="1.5" fill="#eeeeee"/><rect x="118.0" y="14" width="6.2" height="1.1" fill="#b0b0b0"/><rect x="132.0" y="14" width="4.0" height="1.1" fill="#b0b0b0"/><rect x="148.6" y="14" width="3.0" height="1.1" fill="#b0b0b0"/><rect x="160.7" y="14" width="9.3" height="1.1" fill="#b0b0b0"/><rect x="174.8" y="14" width="6.9" height="1.1" fill="#b0b0b0"/><rect x="191.8" y="14" width="3.3" height="1.1" fill="#b0b0b0"/><rect x="118.0" y="19" width="7.9" height="1.1" fill="#b0b0b0"/><rect x="134.4" y="19" width="8.1" height="1.1" fill="#b0b0b0"/><rect x="148.1" y="19" width="4.7" height="1.1" fill="#b0b0b0"/><rect x="157.9" y="19" width="6.5" height="1.1" fill="#b0b0b0"/><rect x="177.6" y="19" width="7.1" height="1.1" fill="#b0b0b0"/><rect x="118.0" y="25" width="8.2" height="1.1" fill="#b0b0b0"/><rect x="131.2" y="25" width="5.0" height="1.1" fill="#b0b0b0"/><rect x="147.0" y="25" width="8.1" height="1.1" fill="#b0b0b0"/><rect x="163.3" y="25" width="3.6" height="1.1" fill="#b0b0b0"/><rect x="173.6" y="25" width="4.5" height="1.1" fill="#b0b0b0"/><rect x="184.9" y="25" width="8.7" height="1.1" fill="#b0b0b0"/><rect x="118.0" y="31" width="9.2" height="1.1" fill="#b0b0b0"/><rect x="131.7" y="31" width="5.7" height="1.1" fill="#b0b0b0"/><rect x="146.3" y="31" width="3.2" height="1.1" fill="#b0b0b0"/><rect x="157.7" y="31" width="9.3" height="1.1" fill="#b0b0b0"/><rect x="172.1" y="31" width="7.2" height="1.1" fill="#b0b0b0"/><rect x="184.5" y="31" width="7.1" height="1.1" fill="#b0b0b0"/><rect x="118.0" y="37" width="4.4" height="1.1" fill="#b0b0b0"/><rect x="126.5" y="37" width="3.6" height="1.1" fill="#b0b0b0"/><rect x="139.5" y="37" width="3.1" height="1.1" fill="#b0b0b0"/><rect x="147.5" y="37" width="6.5" height="1.1" fill="#b0b0b0"/><rect x="167.1" y="37" width="5.9" height="1.1" fill="#b0b0b0"/><rect x="181.1" y="37" width="7.5" height="1.1" fill="#b0b0b0"/><rect x="118.0" y="43" width="4.2" height="1.1" fill="#b0b0b0"/><rect x="132.3" y="43" width="9.7" height="1.1" fill="#b0b0b0"/><rect x="146.5" y="43" width="6.9" height="1.1" fill="#b0b0b0"/><rect x="163.5" y="43" width="4.0" height="1.1" fill="#b0b0b0"/><rect x="174.2" y="43" width="10.0" height="1.1" fill="#b0b0b0"/><rect x="118.0" y="49" width="7.9" height="1.1" fill="#b0b0b0"/><rect x="139.4" y="49" width="4.7" height="1.1" fill="#b0b0b0"/><rect x="154.2" y="49" width="3.3" height="1.1" fill="#b0b0b0"/><rect x="165.2" y="49" width="7.7" height="1.1" fill="#b0b0b0"/><rect x="182.8" y="49" width="8.4" height="1.1" fill="#b0b0b0"/><rect x="143" y="22" width="10" height="2" fill="#9ea0f0"/><rect x="143" y="28" width="9" height="2" fill="#f0c8d0"/><rect x="143" y="34" width="8" height="2" fill="#9ea0f0"/><rect x="143" y="40" width="6" height="2" fill="#9ea0f0"/><rect x="143" y="46" width="10" height="2" fill="#9ea0f0"/><rect x="180" y="22" width="6" height="2" fill="#2a9a88"/><rect x="180" y="28" width="6" height="2" fill="#2a9a88"/><rect x="180" y="34" width="6" height="2" fill="#2a9a88"/><rect x="180" y="40" width="6" height="2" fill="#2a9a88"/><rect x="180" y="46" width="6" height="2" fill="#2a9a88"/><rect x="118.0" y="66" width="7.0" height="1.1" fill="#a8a8a8"/><rect x="133.3" y="66" width="7.0" height="1.1" fill="#a8a8a8"/><rect x="146.4" y="66" width="8.7" height="1.1" fill="#a8a8a8"/><rect x="167.3" y="66" width="7.6" height="1.1" fill="#a8a8a8"/><rect x="180.5" y="66" width="6.6" height="1.1" fill="#a8a8a8"/><rect x="194.4" y="66" width="4.7" height="1.1" fill="#a8a8a8"/><rect x="118.0" y="72" width="10.0" height="1.1" fill="#a8a8a8"/><rect x="132.4" y="72" width="9.0" height="1.1" fill="#a8a8a8"/><rect x="151.5" y="72" width="5.7" height="1.1" fill="#a8a8a8"/><rect x="164.0" y="72" width="7.7" height="1.1" fill="#a8a8a8"/><rect x="180.3" y="72" width="7.8" height="1.1" fill="#a8a8a8"/><rect x="118.0" y="78" width="8.4" height="1.1" fill="#a8a8a8"/><rect x="140.2" y="78" width="9.8" height="1.1" fill="#a8a8a8"/><rect x="160.1" y="78" width="3.3" height="1.1" fill="#a8a8a8"/><rect x="167.5" y="78" width="3.9" height="1.1" fill="#a8a8a8"/><rect x="184.8" y="78" width="5.1" height="1.1" fill="#a8a8a8"/><rect x="118.0" y="84" width="5.2" height="1.1" fill="#a8a8a8"/><rect x="132.7" y="84" width="6.1" height="1.1" fill="#a8a8a8"/><rect x="143.4" y="84" width="7.1" height="1.1" fill="#a8a8a8"/><rect x="162.9" y="84" width="4.1" height="1.1" fill="#a8a8a8"/><rect x="173.3" y="84" width="5.9" height="1.1" fill="#a8a8a8"/><rect x="183.5" y="84" width="6.5" height="1.1" fill="#a8a8a8"/><rect x="118.0" y="90" width="7.6" height="1.1" fill="#a8a8a8"/><rect x="134.9" y="90" width="9.0" height="1.1" fill="#a8a8a8"/><rect x="149.4" y="90" width="7.0" height="1.1" fill="#a8a8a8"/><rect x="164.1" y="90" width="7.2" height="1.1" fill="#a8a8a8"/><rect x="176.5" y="90" width="8.4" height="1.1" fill="#a8a8a8"/><rect x="189.9" y="90" width="4.2" height="1.1" fill="#a8a8a8"/><rect x="118.0" y="96" width="9.6" height="1.1" fill="#a8a8a8"/><rect x="136.0" y="96" width="5.9" height="1.1" fill="#a8a8a8"/><rect x="148.3" y="96" width="4.9" height="1.1" fill="#a8a8a8"/><rect x="163.4" y="96" width="4.2" height="1.1" fill="#a8a8a8"/><rect x="172.9" y="96" width="6.2" height="1.1" fill="#a8a8a8"/><rect x="184.7" y="96" width="7.5" height="1.1" fill="#a8a8a8"/><rect x="172" y="65" width="3" height="3" fill="#e53935"/><rect x="172" y="71" width="3" height="3" fill="#e53935"/><rect x="172" y="77" width="3" height="2" fill="#e53935"/><rect x="0" y="0" width="201" height="6.5" fill="#00695c"/><rect x="0" y="105.3" width="201" height="0.7" fill="#d9d9d9"/></g></svg><div class="tname">Fuel level monitoring</div></div>
<div class="tcard" style="left:1219px"><svg class="abs" style="left:0;top:0;width:201px;height:106px" viewBox="0 0 201 106"><clipPath id="tc4"><rect x="0" y="0" width="201" height="106"/></clipPath><g clip-path="url(#tc4)"><rect x="0" y="6" width="201" height="100" fill="#dedede"/><rect x="86" y="8" width="15" height="2" fill="#0f6b5f"/><rect x="41" y="14" width="25" height="3" fill="#8a8a8a"/><path d="M72 18.5 H97 M103 18.5 H128 M134 18.5 H160 M166 18.5 H192" stroke="#c8c8c8" stroke-width="0.6"/><rect x="51" y="20" width="75" height="25.5" fill="#c2dcf3"/><path d="M13.5 26 V48 M25.5 26 V48 M151 40 V62.5" stroke="#8a8a8a" stroke-width="0.7"/><path d="M13.5 28 V46 M25.5 28 V46 M151 45 V50" stroke="#9fc3e6" stroke-width="0.6"/><path d="M35 23.4 H51 M126 26 H160 V69.5" stroke="#3a3a3a" stroke-width="0.8" fill="none"/><path d="M11 61 H54 M129 89 H145 M117 72 H152" stroke="#9a9a9a" stroke-width="0.5" fill="none"/><rect x="66" y="49" width="25" height="18" fill="none" stroke="#c4c4c4" stroke-width="0.5"/><rect x="107" y="49" width="25" height="18" fill="none" stroke="#c4c4c4" stroke-width="0.5"/><path d="M77 59 V63 M118 58 V64 M124 54 V60" stroke="#2a5aa0" stroke-width="1.1"/><path d="M166 53 L170 51 L174 54 L178 52 L182 54 L186 51 L190 52" stroke="#3a6ab0" stroke-width="0.8" fill="none"/><rect x="164" y="42" width="28" height="0.6" fill="#9a9a9a"/><rect x="166" y="59" width="26" height="1" fill="#b0b0b0"/><path d="M94.6 74 Q94.6 68.4 103.6 68.4 Q112.7 68.4 112.7 74 V94 Q112.7 98.3 103.6 98.3 Q94.6 98.3 94.6 94Z" fill="#fff"/><rect x="97" y="81" width="7" height="2.5" fill="#8a8a8a"/><circle cx="62.6" cy="79.6" r="5.6" fill="#fff" stroke="#e8e8e8" stroke-width="1"/><circle cx="62.6" cy="79.6" r="3" fill="none" stroke="#777" stroke-width="0.6"/><rect x="45" y="77" width="5" height="12" fill="#fff"/><rect x="145" y="80" width="25" height="16.7" fill="#fff"/><circle cx="162" cy="88.7" r="5" fill="none" stroke="#777" stroke-width="0.6"/><path d="M132 69 L139 72.7 M132 72.7 L139 69" stroke="#444" stroke-width="1.2"/><rect x="58" y="91" width="5" height="2" fill="#9a9a9a"/><rect x="0" y="0" width="201" height="6.5" fill="#00695c"/><rect x="0" y="105.3" width="201" height="0.7" fill="#d9d9d9"/></g></svg><div class="tname">Swimming pool SCADA sys&#8230;</div></div>

<div class="ttl" style="left:339px;top:328px">Devices</div>
<svg class="arr" viewBox="0 0 24 24" style="left:403px;top:327.75px;fill:#d0d0d0"><path d="M9 5v2h6.59L4 18.59 5.41 20 17 8.41V15h2V5z"/></svg>
<div class="btn out" style="left:600px;top:327px;width:125px;height:45px;line-height:43px">View docs</div>
<div class="btn fill" style="left:740px;top:327px;width:132px;height:45px;line-height:45px">Add device</div>
<div class="stat red" style="left:339px;top:387px;width:168px;height:99px"><div class="lb">Inactive</div><div class="vl">6</div><svg viewBox="0 0 24 24"><path d="M9 5v2h6.59L4 18.59 5.41 20 17 8.41V15h2V5z"/></svg></div>
<div class="stat tl" style="left:522px;top:387px;width:167px;height:99px"><div class="lb">Active</div><div class="vl">0</div><svg viewBox="0 0 24 24"><path d="M9 5v2h6.59L4 18.59 5.41 20 17 8.41V15h2V5z"/></svg></div>
<div class="stat " style="left:705px;top:387px;width:167px;height:99px"><div class="lb">Total</div><div class="vl">6</div><svg viewBox="0 0 24 24"><path d="M9 5v2h6.59L4 18.59 5.41 20 17 8.41V15h2V5z"/></svg></div>
<div class="ttl" style="left:909px;top:328px">Alarms</div>
<svg class="arr" viewBox="0 0 24 24" style="left:973px;top:327.75px;fill:#d0d0d0"><path d="M9 5v2h6.59L4 18.59 5.41 20 17 8.41V15h2V5z"/></svg>
<div class="stat red" style="left:909px;top:387px;width:163px;height:99px"><div class="lb">Critical</div><div class="vl">0<svg style="position:absolute;left:15px;top:3px;width:20px;height:20px;right:auto;fill:#e3202b" viewBox="0 0 24 24"><path d="M1 21h22L12 2 1 21zm12-3h-2v-2h2v2zm0-4h-2v-4h2v4z"/></svg></div><svg viewBox="0 0 24 24"><path d="M9 5v2h6.59L4 18.59 5.41 20 17 8.41V15h2V5z"/></svg></div>
<div class="stat tl" style="left:1088px;top:387px;width:162px;height:99px"><div class="lb">Assigned to me</div><div class="vl">0</div><svg viewBox="0 0 24 24"><path d="M9 5v2h6.59L4 18.59 5.41 20 17 8.41V15h2V5z"/></svg></div>
<div class="stat " style="left:1266px;top:387px;width:163px;height:99px"><div class="lb">Total</div><div class="vl">1</div><svg viewBox="0 0 24 24"><path d="M9 5v2h6.59L4 18.59 5.41 20 17 8.41V15h2V5z"/></svg></div>
<div class="ttl" style="left:339px;top:544px">Dashboards</div>
<svg class="arr" viewBox="0 0 24 24" style="left:432px;top:543.75px;fill:#d0d0d0"><path d="M9 5v2h6.59L4 18.59 5.41 20 17 8.41V15h2V5z"/></svg>
<div class="sel" style="left:573px;top:533px;width:123px;height:40px"><span>Last viewed</span><svg viewBox="0 0 12 8"><path d="M0.8 1 L6 6.3 L11.2 1" fill="none" stroke="#8a8a8a" stroke-width="1.6"/></svg></div>
<div class="btn fill" style="left:706px;top:531px;width:166px;height:45px;line-height:45px">Add dashboard</div>
<div class="txt" style="left:399px;top:599px;font-size:14.5px;line-height:18px;color:#a8a8a8">Name</div>
<div class="txt" style="left:762px;top:599px;font-size:14px;line-height:18px;color:#a8a8a8">Last viewed</div>
<svg class="abs" style="left:840px;top:598px;width:21px;height:21px;fill:#666;stroke:#666;stroke-width:1.1" viewBox="0 0 24 24"><path d="M20 12l-1.41-1.41L13 16.17V4h-2v12.17l-5.58-5.59L4 12l8 8 8-8z"/></svg>
<svg class="abs" style="left:354px;top:634px;width:29px;height:29px;fill:#cfcfcf" viewBox="0 0 24 24"><path d="M22 9.24l-7.19-.62L12 2 9.19 8.63 2 9.24l5.46 4.73L5.82 21 12 17.27 18.18 21l-1.63-7.03L22 9.24zM12 15.4l-3.76 2.27 1-4.28-3.32-2.88 4.38-.38L12 6.1l1.71 4.04 4.38.38-3.32 2.88 1 4.28L12 15.4z"/></svg>
<div class="txt" style="left:399px;top:640px;font-size:14.4px;line-height:18px;color:#222">Temperature &amp; Humidity dashboard</div>
<div class="txt" style="left:762px;top:640px;font-size:14.4px;line-height:18px;color:#757575">52 min ago</div>
<svg class="abs" style="left:354px;top:677px;width:29px;height:29px;fill:#cfcfcf" viewBox="0 0 24 24"><path d="M22 9.24l-7.19-.62L12 2 9.19 8.63 2 9.24l5.46 4.73L5.82 21 12 17.27 18.18 21l-1.63-7.03L22 9.24zM12 15.4l-3.76 2.27 1-4.28-3.32-2.88 4.38-.38L12 6.1l1.71 4.04 4.38.38-3.32 2.88 1 4.28L12 15.4z"/></svg>
<div class="txt" style="left:399px;top:683px;font-size:14.4px;line-height:18px;color:#222">Temperature &amp; Humidity dashboard</div>
<div class="txt" style="left:762px;top:683px;font-size:14.4px;line-height:18px;color:#757575">1 hr ago</div>
<svg class="abs" style="left:354px;top:719px;width:29px;height:29px;fill:#cfcfcf" viewBox="0 0 24 24"><path d="M22 9.24l-7.19-.62L12 2 9.19 8.63 2 9.24l5.46 4.73L5.82 21 12 17.27 18.18 21l-1.63-7.03L22 9.24zM12 15.4l-3.76 2.27 1-4.28-3.32-2.88 4.38-.38L12 6.1l1.71 4.04 4.38.38-3.32 2.88 1 4.28L12 15.4z"/></svg>
<div class="txt" style="left:399px;top:725px;font-size:14.4px;line-height:18px;color:#222">Dew point dashboard</div>
<div class="txt" style="left:762px;top:725px;font-size:14.4px;line-height:18px;color:#757575">21 hr ago</div>
<svg class="abs" style="left:354px;top:762px;width:29px;height:29px;fill:#cfcfcf" viewBox="0 0 24 24"><path d="M22 9.24l-7.19-.62L12 2 9.19 8.63 2 9.24l5.46 4.73L5.82 21 12 17.27 18.18 21l-1.63-7.03L22 9.24zM12 15.4l-3.76 2.27 1-4.28-3.32-2.88 4.38-.38L12 6.1l1.71 4.04 4.38.38-3.32 2.88 1 4.28L12 15.4z"/></svg>
<div class="txt" style="left:399px;top:768px;font-size:14.4px;line-height:18px;color:#222">Temperature &amp; Humidity</div>
<div class="txt" style="left:762px;top:768px;font-size:14.4px;line-height:18px;color:#757575">day ago</div>
<div class="ttl" style="left:909px;top:532px">Activity</div>
<div class="sel" style="left:1336px;top:531px;width:94px;height:40px"><span>Devices</span><svg viewBox="0 0 12 8"><path d="M0.8 1 L6 6.3 L11.2 1" fill="none" stroke="#8a8a8a" stroke-width="1.6"/></svg></div>
<svg class="abs" style="left:908px;top:571px;width:31px;height:31px;fill:#8a8a8a" viewBox="0 0 24 24"><path d="M11.99 2C6.47 2 2 6.48 2 12s4.47 10 9.99 10C17.52 22 22 17.52 22 12S17.52 2 11.99 2zM12 20c-4.42 0-8-3.58-8-8s3.58-8 8-8 8 3.58 8 8-3.58 8-8 8zm.5-13H11v6l5.25 3.15.75-1.23-4.5-2.67z"/></svg>
<div class="txt" style="left:944px;top:576px;font-size:17.5px;line-height:22px;color:#8a8a8a">History - last 30 days</div>
<div class="txt" style="left:908px;top:615px;font-size:14px;line-height:16px;color:#666">1</div>
<div class="txt" style="left:908px;top:778px;font-size:14px;line-height:16px;color:#666">0</div>
<svg class="abs" style="left:899px;top:600px;width:541px;height:200px" viewBox="899 600 541 200"><path d="M1180.5 786 L1180.5 622.5 L1181.5 786 L1195.5 786 L1196 622.5 L1197 786 L1428 786" fill="none" stroke="#00695c" stroke-width="3.5" stroke-linejoin="round"/></svg>
<div class="txt" style="left:950px;top:796px;font-size:12.5px;line-height:15px;color:#666">May 09</div>
<div class="txt" style="left:1017px;top:796px;font-size:12.5px;line-height:15px;color:#666">May 13</div>
<div class="txt" style="left:1084px;top:796px;font-size:12.5px;line-height:15px;color:#666">May 17</div>
<div class="txt" style="left:1151px;top:796px;font-size:12.5px;line-height:15px;color:#666">May 21</div>
<div class="txt" style="left:1218px;top:796px;font-size:12.5px;line-height:15px;color:#666">May 25</div>
<div class="txt" style="left:1285px;top:796px;font-size:12.5px;line-height:15px;color:#666">May 29</div>
<div class="txt" style="left:1342px;top:796.5px;font-size:13.5px;line-height:16px;color:#555;font-weight:bold">Jun</div>
<div class="txt" style="left:1403px;top:796px;width:26px;overflow:hidden;font-size:12.5px;line-height:15px;color:#666">Jun 03</div>
<div class="txt" style="left:1467px;top:106.5px;font-size:17.3px;line-height:21px;-webkit-text-stroke:0.5px #2b2b2b;letter-spacing:0.35px;color:#2b2b2b">Get started</div>
<div class="abs" style="left:1467px;top:156px;width:428px;height:215px;border-radius:14px;background:#f5f6f6"></div>
<div class="abs" style="left:1482px;top:179px;width:30px;height:30px;border-radius:50%;background:#00695c;color:#fff;font-size:18px;line-height:30px;text-align:center">1</div>
<div class="txt" style="left:1527px;top:183px;font-size:15.5px;line-height:19px;-webkit-text-stroke:0.45px #222;letter-spacing:0.3px;color:#222">Create device</div>
<div class="txt" style="left:1486px;top:242.4px;font-size:15.5px;line-height:19.6px;letter-spacing:0.12px;color:#757575">Let's provision your first device to the platform via UI.<br>Follow the documentation on how to do it:</div>
<div class="abs" style="left:1487px;top:307px;width:214px;height:45px;border-radius:5px;border:1px solid #d6d6d6;background:transparent"></div>
<svg class="abs" style="left:1500px;top:317px;width:24px;height:24px;fill:#00695c" viewBox="0 0 24 24"><path d="M14 2H6c-1.1 0-1.99.9-1.99 2L4 20c0 1.1.89 2 1.99 2H18c1.1 0 2-.9 2-2V8l-6-6zm2 16H8v-2h8v2zm0-4H8v-2h8v2zm-3-5V3.5L18.5 9H13z"/></svg>
<div class="txt" style="left:1530px;top:320px;font-size:15.3px;line-height:19px;-webkit-text-stroke:0.45px #00695c;letter-spacing:0.3px;color:#00695c">How to create Device</div>
<div class="abs" style="left:1482px;top:386px;width:30px;height:30px;border-radius:50%;background:#757575;color:#fff;font-size:18px;line-height:30px;text-align:center">2</div>
<div class="txt" style="left:1527px;top:391px;font-size:15.2px;line-height:19px;color:#333">Connect device</div>
<div class="abs" style="left:1482px;top:446px;width:30px;height:30px;border-radius:50%;background:#757575;color:#fff;font-size:18px;line-height:30px;text-align:center">3</div>
<div class="txt" style="left:1527px;top:451px;font-size:15.2px;line-height:19px;color:#333">Create dashboard</div>
<div class="abs" style="left:1482px;top:506px;width:30px;height:30px;border-radius:50%;background:#757575;color:#fff;font-size:18px;line-height:30px;text-align:center">4</div>
<div class="txt" style="left:1527px;top:511px;font-size:15.2px;line-height:19px;color:#333">Configure alarm rules</div>
<div class="abs" style="left:1482px;top:566px;width:30px;height:30px;border-radius:50%;background:#757575;color:#fff;font-size:18px;line-height:30px;text-align:center">5</div>
<div class="txt" style="left:1527px;top:571px;font-size:15.2px;line-height:19px;color:#333">Create alarm</div>
<div class="abs" style="left:1482px;top:626px;width:30px;height:30px;border-radius:50%;background:#757575;color:#fff;font-size:18px;line-height:30px;text-align:center">6</div>
<div class="txt" style="left:1527px;top:631px;font-size:15.2px;line-height:19px;color:#333">Create customer and share dashboard</div>
<div class="ttl" style="left:339px;top:874px">Quick links</div>
<svg class="abs" style="left:638px;top:858px;width:30px;height:30px;fill:#8a8a8a" viewBox="0 0 24 24"><path d="M3 17.25V21h3.75L17.81 9.94l-3.75-3.75L3 17.25zM20.71 7.04c.39-.39.39-1.02 0-1.41l-2.34-2.34c-.39-.39-1.02-.39-1.41 0l-1.83 1.83 3.75 3.75 1.83-1.83z"/></svg>
<div class="chip" style="left:339px;top:903px;width:161px">Alarms</div>
<div class="chip" style="left:512px;top:903px;width:161px">Dashboards</div>
<div class="chip" style="left:339px;top:936px;width:161px">Devices</div>
<div class="chip dash" style="left:512px;top:936px;width:161px">+</div>
<div class="ttl" style="left:710px;top:874px">Documentation</div>
<svg class="arr" viewBox="0 0 24 24" style="left:825px;top:873.75px;fill:#d0d0d0"><path d="M9 5v2h6.59L4 18.59 5.41 20 17 8.41V15h2V5z"/></svg>
<svg class="abs" style="left:1023px;top:858px;width:30px;height:30px;fill:#8a8a8a" viewBox="0 0 24 24"><path d="M3 17.25V21h3.75L17.81 9.94l-3.75-3.75L3 17.25zM20.71 7.04c.39-.39.39-1.02 0-1.41l-2.34-2.34c-.39-.39-1.02-.39-1.41 0l-1.83 1.83 3.75 3.75 1.83-1.83z"/></svg>
<div class="chip" style="left:710px;top:903px;width:168px">Getting started</div>
<div class="chip" style="left:889px;top:903px;width:168px">Rule engine</div>
<div class="chip" style="left:710px;top:936px;width:168px">API</div>
<div class="chip" style="left:889px;top:936px;width:168px">Device profiles</div>
<div class="chip dash" style="left:710px;top:968px;width:168px">+</div>
<div class="ttl" style="left:1095px;top:864px">Usage</div>
<svg class="arr" viewBox="0 0 24 24" style="left:1147px;top:863.75px;fill:#d0d0d0"><path d="M9 5v2h6.59L4 18.59 5.41 20 17 8.41V15h2V5z"/></svg>
<div class="sel" style="left:1337px;top:853px;width:93px;height:40px"><span>Entities</span><svg viewBox="0 0 12 8"><path d="M0.8 1 L6 6.3 L11.2 1" fill="none" stroke="#8a8a8a" stroke-width="1.6"/></svg></div>
<div class="txt" style="left:1095px;top:913.0px;font-size:14.6px;line-height:18px;color:#a3a3a3">Devices</div>
<div class="txt" style="left:1336px;top:913.0px;font-size:15px;line-height:18px;color:#444">6 / &#8734;</div>
<div class="abs" style="left:1387px;top:917.0px;width:43px;height:10px;border-radius:3px;background:#9ddfd8"></div>
<div class="txt" style="left:1095px;top:941.5px;font-size:14.6px;line-height:18px;color:#a3a3a3">Assets</div>
<div class="txt" style="left:1336px;top:941.5px;font-size:15px;line-height:18px;color:#444">0 / &#8734;</div>
<div class="abs" style="left:1387px;top:945.5px;width:43px;height:10px;border-radius:3px;background:#9ddfd8"></div>
<div class="txt" style="left:1095px;top:970.0px;font-size:14.6px;line-height:18px;color:#a3a3a3">Users</div>
<div class="txt" style="left:1336px;top:970.0px;font-size:15px;line-height:18px;color:#444">3 / &#8734;</div>
<div class="abs" style="left:1387px;top:974.0px;width:43px;height:10px;border-radius:3px;background:#9ddfd8"></div>
<div class="txt" style="left:1095px;top:998.5px;font-size:14.6px;line-height:18px;color:#a3a3a3">Dashboards</div>
<div class="txt" style="left:1336px;top:998.5px;font-size:15px;line-height:18px;color:#444">4 / &#8734;</div>
<div class="abs" style="left:1387px;top:1002.5px;width:43px;height:10px;border-radius:3px;background:#9ddfd8"></div>
<div class="txt" style="left:1095px;top:1027.0px;font-size:14.6px;line-height:18px;color:#a3a3a3">Customers</div>
<div class="txt" style="left:1336px;top:1027.0px;font-size:15px;line-height:18px;color:#444">1 / &#8734;</div>
<div class="abs" style="left:1387px;top:1031.0px;width:43px;height:10px;border-radius:3px;background:#9ddfd8"></div>
<div class="txt" style="left:1467px;top:855px;font-size:16.8px;line-height:21px;-webkit-text-stroke:0.45px #2b2b2b;letter-spacing:0.35px;color:#2b2b2b">Connect mobile app</div>
<div class="abs" style="left:1514px;top:912px;width:180px;height:54px;border-radius:7px;background:#000;border:1px solid #a6a6a6"></div>
<svg class="abs" style="left:1530px;top:919px;width:30px;height:37px;fill:#fff" viewBox="0 0 814 1000"><path d="M788.1 340.9c-5.8 4.5-108.2 62.2-108.2 190.5 0 148.4 130.3 200.9 134.2 202.2-.6 3.2-20.7 71.9-68.7 141.9-42.8 61.6-87.5 123.1-155.5 123.1s-85.5-39.5-164-39.5c-76.5 0-103.7 40.8-165.9 40.8s-105.6-57-155.5-127C46.7 790.7 0 663 0 541.8c0-194.4 126.4-297.5 250.8-297.5 66.1 0 121.2 43.4 162.7 43.4 39.5 0 101.1-46 176.3-46 28.5 0 130.9 2.6 198.3 99.2zm-234-181.5c31.1-36.9 53.1-88.1 53.1-139.3 0-7.1-.6-14.3-1.9-20.1-50.6 1.9-110.8 33.7-147.1 75.8-28.5 32.4-55.1 83.6-55.1 135.5 0 7.8 1.3 15.6 1.9 18.1 3.2.6 8.4 1.3 13.6 1.3 45.4 0 102.5-30.4 135.5-71.3z"/></svg>
<div class="txt" style="left:1572px;top:919px;font-size:12.5px;line-height:15px;color:#fff;letter-spacing:0.75px">Download on the</div>
<div class="txt" id="appst" style="left:1570px;top:932px;font-size:25px;line-height:28px;color:#fff;letter-spacing:-0.6px">App Store</div>
<div class="abs" style="left:1514px;top:976px;width:180px;height:53px;border-radius:7px;background:#000;border:1px solid #a6a6a6"></div>
<svg class="abs" style="left:1526px;top:985px;width:33px;height:35px" viewBox="0 0 30 32"><path d="M1 1.5 L16.5 16 L1 30.5 Q0 30 0 28.5 V3.5 Q0 2 1 1.5Z" fill="#4a7fdb"/><path d="M1 1.5 Q2 0.5 3.5 1.3 L21.5 11.3 L16.5 16 Z" fill="#1fa34a"/><path d="M1 30.5 Q2 31.5 3.5 30.7 L21.5 20.7 L16.5 16 Z" fill="#e8352f"/><path d="M21.5 11.3 L27.5 14.6 Q29.5 16 27.5 17.4 L21.5 20.7 L16.5 16Z" fill="#fbb703"/></svg>
<div class="txt" style="left:1568px;top:983px;font-size:10.2px;line-height:12px;color:#fff;letter-spacing:0px;font-weight:bold">GET IT ON</div>
<div class="txt" id="gplay" style="left:1567px;top:995.5px;font-size:22.5px;line-height:26px;color:#fff;letter-spacing:-0.7px">Google Play</div>
<svg class="abs" style="left:1718px;top:913px;width:116px;height:116px" viewBox="0 0 49 49" shape-rendering="crispEdges" fill="#000"><rect x="0" y="0" width="7" height="1.02"/><rect x="8" y="0" width="5" height="1.02"/><rect x="14" y="0" width="2" height="1.02"/><rect x="19" y="0" width="1" height="1.02"/><rect x="21" y="0" width="1" height="1.02"/><rect x="23" y="0" width="4" height="1.02"/><rect x="28" y="0" width="1" height="1.02"/><rect x="31" y="0" width="1" height="1.02"/><rect x="33" y="0" width="3" height="1.02"/><rect x="37" y="0" width="2" height="1.02"/><rect x="40" y="0" width="1" height="1.02"/><rect x="42" y="0" width="7" height="1.02"/><rect x="0" y="1" width="1" height="1.02"/><rect x="6" y="1" width="1" height="1.02"/><rect x="12" y="1" width="1" height="1.02"/><rect x="16" y="1" width="1" height="1.02"/><rect x="19" y="1" width="1" height="1.02"/><rect x="21" y="1" width="1" height="1.02"/><rect x="26" y="1" width="2" height="1.02"/><rect x="29" y="1" width="5" height="1.02"/><rect x="35" y="1" width="3" height="1.02"/><rect x="39" y="1" width="2" height="1.02"/><rect x="42" y="1" width="1" height="1.02"/><rect x="48" y="1" width="1" height="1.02"/><rect x="0" y="2" width="1" height="1.02"/><rect x="2" y="2" width="3" height="1.02"/><rect x="6" y="2" width="1" height="1.02"/><rect x="8" y="2" width="3" height="1.02"/><rect x="17" y="2" width="1" height="1.02"/><rect x="22" y="2" width="3" height="1.02"/><rect x="26" y="2" width="11" height="1.02"/><rect x="39" y="2" width="2" height="1.02"/><rect x="42" y="2" width="1" height="1.02"/><rect x="44" y="2" width="3" height="1.02"/><rect x="48" y="2" width="1" height="1.02"/><rect x="0" y="3" width="1" height="1.02"/><rect x="2" y="3" width="3" height="1.02"/><rect x="6" y="3" width="1" height="1.02"/><rect x="8" y="3" width="1" height="1.02"/><rect x="10" y="3" width="1" height="1.02"/><rect x="15" y="3" width="3" height="1.02"/><rect x="21" y="3" width="2" height="1.02"/><rect x="29" y="3" width="1" height="1.02"/><rect x="31" y="3" width="5" height="1.02"/><rect x="38" y="3" width="1" height="1.02"/><rect x="42" y="3" width="1" height="1.02"/><rect x="44" y="3" width="3" height="1.02"/><rect x="48" y="3" width="1" height="1.02"/><rect x="0" y="4" width="1" height="1.02"/><rect x="2" y="4" width="3" height="1.02"/><rect x="6" y="4" width="1" height="1.02"/><rect x="9" y="4" width="2" height="1.02"/><rect x="12" y="4" width="1" height="1.02"/><rect x="15" y="4" width="2" height="1.02"/><rect x="19" y="4" width="8" height="1.02"/><rect x="28" y="4" width="1" height="1.02"/><rect x="30" y="4" width="2" height="1.02"/><rect x="36" y="4" width="1" height="1.02"/><rect x="39" y="4" width="2" height="1.02"/><rect x="42" y="4" width="1" height="1.02"/><rect x="44" y="4" width="3" height="1.02"/><rect x="48" y="4" width="1" height="1.02"/><rect x="0" y="5" width="1" height="1.02"/><rect x="6" y="5" width="1" height="1.02"/><rect x="8" y="5" width="4" height="1.02"/><rect x="13" y="5" width="2" height="1.02"/><rect x="17" y="5" width="1" height="1.02"/><rect x="21" y="5" width="2" height="1.02"/><rect x="26" y="5" width="1" height="1.02"/><rect x="30" y="5" width="1" height="1.02"/><rect x="35" y="5" width="1" height="1.02"/><rect x="37" y="5" width="1" height="1.02"/><rect x="42" y="5" width="1" height="1.02"/><rect x="48" y="5" width="1" height="1.02"/><rect x="0" y="6" width="7" height="1.02"/><rect x="8" y="6" width="1" height="1.02"/><rect x="10" y="6" width="1" height="1.02"/><rect x="12" y="6" width="1" height="1.02"/><rect x="14" y="6" width="1" height="1.02"/><rect x="16" y="6" width="1" height="1.02"/><rect x="18" y="6" width="1" height="1.02"/><rect x="20" y="6" width="1" height="1.02"/><rect x="22" y="6" width="1" height="1.02"/><rect x="24" y="6" width="1" height="1.02"/><rect x="26" y="6" width="1" height="1.02"/><rect x="28" y="6" width="1" height="1.02"/><rect x="30" y="6" width="1" height="1.02"/><rect x="32" y="6" width="1" height="1.02"/><rect x="34" y="6" width="1" height="1.02"/><rect x="36" y="6" width="1" height="1.02"/><rect x="38" y="6" width="1" height="1.02"/><rect x="40" y="6" width="1" height="1.02"/><rect x="42" y="6" width="7" height="1.02"/><rect x="9" y="7" width="1" height="1.02"/><rect x="11" y="7" width="1" height="1.02"/><rect x="13" y="7" width="2" height="1.02"/><rect x="17" y="7" width="2" height="1.02"/><rect x="20" y="7" width="3" height="1.02"/><rect x="26" y="7" width="1" height="1.02"/><rect x="28" y="7" width="1" height="1.02"/><rect x="30" y="7" width="5" height="1.02"/><rect x="37" y="7" width="2" height="1.02"/><rect x="40" y="7" width="1" height="1.02"/><rect x="0" y="8" width="1" height="1.02"/><rect x="4" y="8" width="5" height="1.02"/><rect x="10" y="8" width="3" height="1.02"/><rect x="16" y="8" width="11" height="1.02"/><rect x="28" y="8" width="5" height="1.02"/><rect x="34" y="8" width="1" height="1.02"/><rect x="36" y="8" width="8" height="1.02"/><rect x="1" y="9" width="2" height="1.02"/><rect x="4" y="9" width="1" height="1.02"/><rect x="7" y="9" width="1" height="1.02"/><rect x="13" y="9" width="1" height="1.02"/><rect x="23" y="9" width="5" height="1.02"/><rect x="33" y="9" width="2" height="1.02"/><rect x="40" y="9" width="1" height="1.02"/><rect x="42" y="9" width="3" height="1.02"/><rect x="46" y="9" width="1" height="1.02"/><rect x="0" y="10" width="3" height="1.02"/><rect x="6" y="10" width="4" height="1.02"/><rect x="11" y="10" width="1" height="1.02"/><rect x="13" y="10" width="3" height="1.02"/><rect x="19" y="10" width="1" height="1.02"/><rect x="21" y="10" width="3" height="1.02"/><rect x="25" y="10" width="1" height="1.02"/><rect x="28" y="10" width="2" height="1.02"/><rect x="32" y="10" width="3" height="1.02"/><rect x="36" y="10" width="1" height="1.02"/><rect x="38" y="10" width="1" height="1.02"/><rect x="41" y="10" width="1" height="1.02"/><rect x="46" y="10" width="1" height="1.02"/><rect x="48" y="10" width="1" height="1.02"/><rect x="0" y="11" width="6" height="1.02"/><rect x="7" y="11" width="1" height="1.02"/><rect x="9" y="11" width="1" height="1.02"/><rect x="12" y="11" width="1" height="1.02"/><rect x="16" y="11" width="3" height="1.02"/><rect x="21" y="11" width="5" height="1.02"/><rect x="27" y="11" width="1" height="1.02"/><rect x="29" y="11" width="2" height="1.02"/><rect x="32" y="11" width="2" height="1.02"/><rect x="42" y="11" width="1" height="1.02"/><rect x="44" y="11" width="1" height="1.02"/><rect x="47" y="11" width="2" height="1.02"/><rect x="1" y="12" width="4" height="1.02"/><rect x="6" y="12" width="2" height="1.02"/><rect x="9" y="12" width="1" height="1.02"/><rect x="11" y="12" width="4" height="1.02"/><rect x="16" y="12" width="2" height="1.02"/><rect x="20" y="12" width="8" height="1.02"/><rect x="31" y="12" width="2" height="1.02"/><rect x="34" y="12" width="4" height="1.02"/><rect x="39" y="12" width="1" height="1.02"/><rect x="43" y="12" width="5" height="1.02"/><rect x="2" y="13" width="2" height="1.02"/><rect x="8" y="13" width="2" height="1.02"/><rect x="14" y="13" width="3" height="1.02"/><rect x="23" y="13" width="1" height="1.02"/><rect x="25" y="13" width="1" height="1.02"/><rect x="27" y="13" width="1" height="1.02"/><rect x="30" y="13" width="3" height="1.02"/><rect x="35" y="13" width="2" height="1.02"/><rect x="39" y="13" width="2" height="1.02"/><rect x="42" y="13" width="3" height="1.02"/><rect x="48" y="13" width="1" height="1.02"/><rect x="0" y="14" width="2" height="1.02"/><rect x="4" y="14" width="3" height="1.02"/><rect x="8" y="14" width="2" height="1.02"/><rect x="12" y="14" width="4" height="1.02"/><rect x="17" y="14" width="1" height="1.02"/><rect x="21" y="14" width="1" height="1.02"/><rect x="23" y="14" width="1" height="1.02"/><rect x="25" y="14" width="2" height="1.02"/><rect x="28" y="14" width="1" height="1.02"/><rect x="30" y="14" width="4" height="1.02"/><rect x="36" y="14" width="3" height="1.02"/><rect x="40" y="14" width="4" height="1.02"/><rect x="0" y="15" width="2" height="1.02"/><rect x="4" y="15" width="1" height="1.02"/><rect x="7" y="15" width="6" height="1.02"/><rect x="14" y="15" width="1" height="1.02"/><rect x="16" y="15" width="2" height="1.02"/><rect x="20" y="15" width="4" height="1.02"/><rect x="25" y="15" width="2" height="1.02"/><rect x="28" y="15" width="2" height="1.02"/><rect x="32" y="15" width="3" height="1.02"/><rect x="36" y="15" width="1" height="1.02"/><rect x="39" y="15" width="2" height="1.02"/><rect x="43" y="15" width="1" height="1.02"/><rect x="45" y="15" width="3" height="1.02"/><rect x="3" y="16" width="4" height="1.02"/><rect x="8" y="16" width="4" height="1.02"/><rect x="13" y="16" width="1" height="1.02"/><rect x="19" y="16" width="3" height="1.02"/><rect x="23" y="16" width="2" height="1.02"/><rect x="26" y="16" width="3" height="1.02"/><rect x="30" y="16" width="1" height="1.02"/><rect x="34" y="16" width="4" height="1.02"/><rect x="39" y="16" width="3" height="1.02"/><rect x="47" y="16" width="1" height="1.02"/><rect x="0" y="17" width="1" height="1.02"/><rect x="2" y="17" width="1" height="1.02"/><rect x="4" y="17" width="2" height="1.02"/><rect x="7" y="17" width="1" height="1.02"/><rect x="10" y="17" width="2" height="1.02"/><rect x="14" y="17" width="1" height="1.02"/><rect x="18" y="17" width="2" height="1.02"/><rect x="23" y="17" width="4" height="1.02"/><rect x="30" y="17" width="1" height="1.02"/><rect x="32" y="17" width="2" height="1.02"/><rect x="36" y="17" width="1" height="1.02"/><rect x="39" y="17" width="5" height="1.02"/><rect x="46" y="17" width="3" height="1.02"/><rect x="1" y="18" width="3" height="1.02"/><rect x="6" y="18" width="3" height="1.02"/><rect x="11" y="18" width="2" height="1.02"/><rect x="14" y="18" width="3" height="1.02"/><rect x="18" y="18" width="1" height="1.02"/><rect x="20" y="18" width="2" height="1.02"/><rect x="24" y="18" width="2" height="1.02"/><rect x="27" y="18" width="2" height="1.02"/><rect x="30" y="18" width="1" height="1.02"/><rect x="32" y="18" width="1" height="1.02"/><rect x="34" y="18" width="3" height="1.02"/><rect x="40" y="18" width="1" height="1.02"/><rect x="42" y="18" width="1" height="1.02"/><rect x="44" y="18" width="2" height="1.02"/><rect x="48" y="18" width="1" height="1.02"/><rect x="0" y="19" width="1" height="1.02"/><rect x="3" y="19" width="2" height="1.02"/><rect x="7" y="19" width="2" height="1.02"/><rect x="10" y="19" width="1" height="1.02"/><rect x="14" y="19" width="1" height="1.02"/><rect x="16" y="19" width="2" height="1.02"/><rect x="20" y="19" width="3" height="1.02"/><rect x="24" y="19" width="3" height="1.02"/><rect x="29" y="19" width="1" height="1.02"/><rect x="32" y="19" width="1" height="1.02"/><rect x="34" y="19" width="1" height="1.02"/><rect x="38" y="19" width="2" height="1.02"/><rect x="41" y="19" width="1" height="1.02"/><rect x="43" y="19" width="3" height="1.02"/><rect x="47" y="19" width="2" height="1.02"/><rect x="2" y="20" width="8" height="1.02"/><rect x="11" y="20" width="1" height="1.02"/><rect x="13" y="20" width="1" height="1.02"/><rect x="17" y="20" width="1" height="1.02"/><rect x="19" y="20" width="1" height="1.02"/><rect x="21" y="20" width="1" height="1.02"/><rect x="26" y="20" width="1" height="1.02"/><rect x="28" y="20" width="1" height="1.02"/><rect x="31" y="20" width="1" height="1.02"/><rect x="34" y="20" width="2" height="1.02"/><rect x="37" y="20" width="1" height="1.02"/><rect x="39" y="20" width="1" height="1.02"/><rect x="41" y="20" width="1" height="1.02"/><rect x="44" y="20" width="2" height="1.02"/><rect x="47" y="20" width="2" height="1.02"/><rect x="0" y="21" width="2" height="1.02"/><rect x="5" y="21" width="1" height="1.02"/><rect x="7" y="21" width="1" height="1.02"/><rect x="10" y="21" width="1" height="1.02"/><rect x="15" y="21" width="1" height="1.02"/><rect x="18" y="21" width="1" height="1.02"/><rect x="20" y="21" width="1" height="1.02"/><rect x="23" y="21" width="1" height="1.02"/><rect x="25" y="21" width="2" height="1.02"/><rect x="28" y="21" width="1" height="1.02"/><rect x="30" y="21" width="1" height="1.02"/><rect x="35" y="21" width="4" height="1.02"/><rect x="40" y="21" width="1" height="1.02"/><rect x="43" y="21" width="2" height="1.02"/><rect x="46" y="21" width="3" height="1.02"/><rect x="0" y="22" width="3" height="1.02"/><rect x="4" y="22" width="5" height="1.02"/><rect x="10" y="22" width="3" height="1.02"/><rect x="16" y="22" width="3" height="1.02"/><rect x="21" y="22" width="6" height="1.02"/><rect x="28" y="22" width="1" height="1.02"/><rect x="30" y="22" width="3" height="1.02"/><rect x="34" y="22" width="1" height="1.02"/><rect x="37" y="22" width="2" height="1.02"/><rect x="40" y="22" width="7" height="1.02"/><rect x="1" y="23" width="1" height="1.02"/><rect x="4" y="23" width="1" height="1.02"/><rect x="8" y="23" width="4" height="1.02"/><rect x="16" y="23" width="1" height="1.02"/><rect x="18" y="23" width="1" height="1.02"/><rect x="21" y="23" width="2" height="1.02"/><rect x="26" y="23" width="3" height="1.02"/><rect x="32" y="23" width="1" height="1.02"/><rect x="34" y="23" width="2" height="1.02"/><rect x="40" y="23" width="1" height="1.02"/><rect x="44" y="23" width="2" height="1.02"/><rect x="48" y="23" width="1" height="1.02"/><rect x="0" y="24" width="1" height="1.02"/><rect x="2" y="24" width="1" height="1.02"/><rect x="4" y="24" width="1" height="1.02"/><rect x="6" y="24" width="1" height="1.02"/><rect x="8" y="24" width="4" height="1.02"/><rect x="16" y="24" width="1" height="1.02"/><rect x="18" y="24" width="1" height="1.02"/><rect x="22" y="24" width="1" height="1.02"/><rect x="24" y="24" width="1" height="1.02"/><rect x="26" y="24" width="4" height="1.02"/><rect x="35" y="24" width="3" height="1.02"/><rect x="39" y="24" width="2" height="1.02"/><rect x="42" y="24" width="1" height="1.02"/><rect x="44" y="24" width="1" height="1.02"/><rect x="46" y="24" width="2" height="1.02"/><rect x="3" y="25" width="2" height="1.02"/><rect x="8" y="25" width="1" height="1.02"/><rect x="10" y="25" width="1" height="1.02"/><rect x="12" y="25" width="1" height="1.02"/><rect x="14" y="25" width="3" height="1.02"/><rect x="19" y="25" width="4" height="1.02"/><rect x="26" y="25" width="2" height="1.02"/><rect x="29" y="25" width="2" height="1.02"/><rect x="32" y="25" width="2" height="1.02"/><rect x="35" y="25" width="1" height="1.02"/><rect x="40" y="25" width="1" height="1.02"/><rect x="44" y="25" width="1" height="1.02"/><rect x="46" y="25" width="3" height="1.02"/><rect x="2" y="26" width="1" height="1.02"/><rect x="4" y="26" width="5" height="1.02"/><rect x="10" y="26" width="3" height="1.02"/><rect x="16" y="26" width="2" height="1.02"/><rect x="20" y="26" width="7" height="1.02"/><rect x="28" y="26" width="4" height="1.02"/><rect x="33" y="26" width="3" height="1.02"/><rect x="38" y="26" width="1" height="1.02"/><rect x="40" y="26" width="7" height="1.02"/><rect x="48" y="26" width="1" height="1.02"/><rect x="0" y="27" width="4" height="1.02"/><rect x="8" y="27" width="2" height="1.02"/><rect x="11" y="27" width="1" height="1.02"/><rect x="14" y="27" width="1" height="1.02"/><rect x="17" y="27" width="2" height="1.02"/><rect x="26" y="27" width="2" height="1.02"/><rect x="29" y="27" width="2" height="1.02"/><rect x="34" y="27" width="3" height="1.02"/><rect x="38" y="27" width="1" height="1.02"/><rect x="41" y="27" width="1" height="1.02"/><rect x="44" y="27" width="2" height="1.02"/><rect x="47" y="27" width="1" height="1.02"/><rect x="0" y="28" width="1" height="1.02"/><rect x="4" y="28" width="1" height="1.02"/><rect x="6" y="28" width="1" height="1.02"/><rect x="12" y="28" width="1" height="1.02"/><rect x="14" y="28" width="1" height="1.02"/><rect x="16" y="28" width="1" height="1.02"/><rect x="18" y="28" width="1" height="1.02"/><rect x="20" y="28" width="7" height="1.02"/><rect x="28" y="28" width="3" height="1.02"/><rect x="34" y="28" width="1" height="1.02"/><rect x="36" y="28" width="3" height="1.02"/><rect x="42" y="28" width="1" height="1.02"/><rect x="44" y="28" width="1" height="1.02"/><rect x="46" y="28" width="1" height="1.02"/><rect x="1" y="29" width="2" height="1.02"/><rect x="4" y="29" width="1" height="1.02"/><rect x="8" y="29" width="6" height="1.02"/><rect x="15" y="29" width="5" height="1.02"/><rect x="22" y="29" width="1" height="1.02"/><rect x="25" y="29" width="1" height="1.02"/><rect x="29" y="29" width="1" height="1.02"/><rect x="32" y="29" width="2" height="1.02"/><rect x="36" y="29" width="4" height="1.02"/><rect x="41" y="29" width="2" height="1.02"/><rect x="45" y="29" width="1" height="1.02"/><rect x="4" y="30" width="1" height="1.02"/><rect x="6" y="30" width="1" height="1.02"/><rect x="8" y="30" width="1" height="1.02"/><rect x="11" y="30" width="9" height="1.02"/><rect x="22" y="30" width="1" height="1.02"/><rect x="24" y="30" width="1" height="1.02"/><rect x="28" y="30" width="2" height="1.02"/><rect x="31" y="30" width="1" height="1.02"/><rect x="34" y="30" width="1" height="1.02"/><rect x="38" y="30" width="1" height="1.02"/><rect x="41" y="30" width="1" height="1.02"/><rect x="43" y="30" width="1" height="1.02"/><rect x="46" y="30" width="1" height="1.02"/><rect x="48" y="30" width="1" height="1.02"/><rect x="0" y="31" width="1" height="1.02"/><rect x="3" y="31" width="3" height="1.02"/><rect x="8" y="31" width="1" height="1.02"/><rect x="10" y="31" width="1" height="1.02"/><rect x="12" y="31" width="1" height="1.02"/><rect x="17" y="31" width="3" height="1.02"/><rect x="23" y="31" width="1" height="1.02"/><rect x="27" y="31" width="4" height="1.02"/><rect x="42" y="31" width="1" height="1.02"/><rect x="44" y="31" width="1" height="1.02"/><rect x="46" y="31" width="3" height="1.02"/><rect x="3" y="32" width="1" height="1.02"/><rect x="6" y="32" width="6" height="1.02"/><rect x="14" y="32" width="1" height="1.02"/><rect x="16" y="32" width="2" height="1.02"/><rect x="21" y="32" width="3" height="1.02"/><rect x="27" y="32" width="3" height="1.02"/><rect x="31" y="32" width="4" height="1.02"/><rect x="36" y="32" width="1" height="1.02"/><rect x="38" y="32" width="1" height="1.02"/><rect x="40" y="32" width="2" height="1.02"/><rect x="43" y="32" width="1" height="1.02"/><rect x="45" y="32" width="2" height="1.02"/><rect x="2" y="33" width="1" height="1.02"/><rect x="5" y="33" width="1" height="1.02"/><rect x="7" y="33" width="1" height="1.02"/><rect x="10" y="33" width="2" height="1.02"/><rect x="14" y="33" width="2" height="1.02"/><rect x="17" y="33" width="1" height="1.02"/><rect x="19" y="33" width="3" height="1.02"/><rect x="23" y="33" width="1" height="1.02"/><rect x="25" y="33" width="1" height="1.02"/><rect x="27" y="33" width="1" height="1.02"/><rect x="30" y="33" width="2" height="1.02"/><rect x="36" y="33" width="2" height="1.02"/><rect x="41" y="33" width="1" height="1.02"/><rect x="46" y="33" width="2" height="1.02"/><rect x="0" y="34" width="1" height="1.02"/><rect x="5" y="34" width="4" height="1.02"/><rect x="12" y="34" width="1" height="1.02"/><rect x="17" y="34" width="1" height="1.02"/><rect x="22" y="34" width="2" height="1.02"/><rect x="26" y="34" width="1" height="1.02"/><rect x="29" y="34" width="1" height="1.02"/><rect x="32" y="34" width="3" height="1.02"/><rect x="37" y="34" width="2" height="1.02"/><rect x="41" y="34" width="1" height="1.02"/><rect x="46" y="34" width="1" height="1.02"/><rect x="48" y="34" width="1" height="1.02"/><rect x="0" y="35" width="2" height="1.02"/><rect x="3" y="35" width="1" height="1.02"/><rect x="5" y="35" width="1" height="1.02"/><rect x="7" y="35" width="2" height="1.02"/><rect x="10" y="35" width="2" height="1.02"/><rect x="14" y="35" width="1" height="1.02"/><rect x="16" y="35" width="1" height="1.02"/><rect x="18" y="35" width="2" height="1.02"/><rect x="22" y="35" width="1" height="1.02"/><rect x="24" y="35" width="1" height="1.02"/><rect x="26" y="35" width="1" height="1.02"/><rect x="31" y="35" width="6" height="1.02"/><rect x="39" y="35" width="1" height="1.02"/><rect x="42" y="35" width="1" height="1.02"/><rect x="44" y="35" width="2" height="1.02"/><rect x="47" y="35" width="1" height="1.02"/><rect x="3" y="36" width="4" height="1.02"/><rect x="8" y="36" width="4" height="1.02"/><rect x="15" y="36" width="1" height="1.02"/><rect x="20" y="36" width="2" height="1.02"/><rect x="25" y="36" width="1" height="1.02"/><rect x="28" y="36" width="8" height="1.02"/><rect x="37" y="36" width="1" height="1.02"/><rect x="39" y="36" width="2" height="1.02"/><rect x="42" y="36" width="1" height="1.02"/><rect x="46" y="36" width="3" height="1.02"/><rect x="3" y="37" width="2" height="1.02"/><rect x="8" y="37" width="3" height="1.02"/><rect x="13" y="37" width="1" height="1.02"/><rect x="15" y="37" width="4" height="1.02"/><rect x="20" y="37" width="4" height="1.02"/><rect x="25" y="37" width="1" height="1.02"/><rect x="27" y="37" width="1" height="1.02"/><rect x="30" y="37" width="6" height="1.02"/><rect x="39" y="37" width="2" height="1.02"/><rect x="42" y="37" width="1" height="1.02"/><rect x="44" y="37" width="1" height="1.02"/><rect x="46" y="37" width="1" height="1.02"/><rect x="48" y="37" width="1" height="1.02"/><rect x="0" y="38" width="2" height="1.02"/><rect x="4" y="38" width="4" height="1.02"/><rect x="9" y="38" width="2" height="1.02"/><rect x="13" y="38" width="3" height="1.02"/><rect x="17" y="38" width="3" height="1.02"/><rect x="24" y="38" width="2" height="1.02"/><rect x="27" y="38" width="1" height="1.02"/><rect x="29" y="38" width="1" height="1.02"/><rect x="31" y="38" width="1" height="1.02"/><rect x="34" y="38" width="2" height="1.02"/><rect x="37" y="38" width="1" height="1.02"/><rect x="39" y="38" width="2" height="1.02"/><rect x="42" y="38" width="3" height="1.02"/><rect x="46" y="38" width="1" height="1.02"/><rect x="48" y="38" width="1" height="1.02"/><rect x="1" y="39" width="1" height="1.02"/><rect x="5" y="39" width="1" height="1.02"/><rect x="7" y="39" width="1" height="1.02"/><rect x="9" y="39" width="1" height="1.02"/><rect x="12" y="39" width="1" height="1.02"/><rect x="16" y="39" width="1" height="1.02"/><rect x="18" y="39" width="4" height="1.02"/><rect x="23" y="39" width="2" height="1.02"/><rect x="26" y="39" width="2" height="1.02"/><rect x="32" y="39" width="1" height="1.02"/><rect x="35" y="39" width="3" height="1.02"/><rect x="39" y="39" width="4" height="1.02"/><rect x="45" y="39" width="1" height="1.02"/><rect x="48" y="39" width="1" height="1.02"/><rect x="2" y="40" width="2" height="1.02"/><rect x="6" y="40" width="1" height="1.02"/><rect x="9" y="40" width="4" height="1.02"/><rect x="18" y="40" width="1" height="1.02"/><rect x="22" y="40" width="7" height="1.02"/><rect x="30" y="40" width="2" height="1.02"/><rect x="39" y="40" width="6" height="1.02"/><rect x="47" y="40" width="1" height="1.02"/><rect x="9" y="41" width="2" height="1.02"/><rect x="12" y="41" width="8" height="1.02"/><rect x="22" y="41" width="1" height="1.02"/><rect x="26" y="41" width="2" height="1.02"/><rect x="30" y="41" width="4" height="1.02"/><rect x="35" y="41" width="1" height="1.02"/><rect x="37" y="41" width="2" height="1.02"/><rect x="40" y="41" width="1" height="1.02"/><rect x="44" y="41" width="2" height="1.02"/><rect x="47" y="41" width="2" height="1.02"/><rect x="0" y="42" width="7" height="1.02"/><rect x="10" y="42" width="3" height="1.02"/><rect x="21" y="42" width="2" height="1.02"/><rect x="24" y="42" width="1" height="1.02"/><rect x="26" y="42" width="2" height="1.02"/><rect x="30" y="42" width="1" height="1.02"/><rect x="33" y="42" width="1" height="1.02"/><rect x="37" y="42" width="4" height="1.02"/><rect x="42" y="42" width="1" height="1.02"/><rect x="44" y="42" width="2" height="1.02"/><rect x="48" y="42" width="1" height="1.02"/><rect x="0" y="43" width="1" height="1.02"/><rect x="6" y="43" width="1" height="1.02"/><rect x="8" y="43" width="1" height="1.02"/><rect x="12" y="43" width="2" height="1.02"/><rect x="15" y="43" width="2" height="1.02"/><rect x="18" y="43" width="1" height="1.02"/><rect x="22" y="43" width="1" height="1.02"/><rect x="26" y="43" width="2" height="1.02"/><rect x="29" y="43" width="1" height="1.02"/><rect x="33" y="43" width="3" height="1.02"/><rect x="40" y="43" width="1" height="1.02"/><rect x="44" y="43" width="1" height="1.02"/><rect x="47" y="43" width="2" height="1.02"/><rect x="0" y="44" width="1" height="1.02"/><rect x="2" y="44" width="3" height="1.02"/><rect x="6" y="44" width="1" height="1.02"/><rect x="9" y="44" width="3" height="1.02"/><rect x="14" y="44" width="2" height="1.02"/><rect x="18" y="44" width="1" height="1.02"/><rect x="21" y="44" width="7" height="1.02"/><rect x="31" y="44" width="2" height="1.02"/><rect x="34" y="44" width="1" height="1.02"/><rect x="39" y="44" width="7" height="1.02"/><rect x="0" y="45" width="1" height="1.02"/><rect x="2" y="45" width="3" height="1.02"/><rect x="6" y="45" width="1" height="1.02"/><rect x="8" y="45" width="2" height="1.02"/><rect x="12" y="45" width="4" height="1.02"/><rect x="19" y="45" width="1" height="1.02"/><rect x="21" y="45" width="2" height="1.02"/><rect x="25" y="45" width="1" height="1.02"/><rect x="28" y="45" width="1" height="1.02"/><rect x="31" y="45" width="1" height="1.02"/><rect x="33" y="45" width="2" height="1.02"/><rect x="36" y="45" width="2" height="1.02"/><rect x="39" y="45" width="1" height="1.02"/><rect x="41" y="45" width="4" height="1.02"/><rect x="46" y="45" width="1" height="1.02"/><rect x="48" y="45" width="1" height="1.02"/><rect x="0" y="46" width="1" height="1.02"/><rect x="2" y="46" width="3" height="1.02"/><rect x="6" y="46" width="1" height="1.02"/><rect x="8" y="46" width="4" height="1.02"/><rect x="13" y="46" width="2" height="1.02"/><rect x="16" y="46" width="2" height="1.02"/><rect x="19" y="46" width="2" height="1.02"/><rect x="23" y="46" width="2" height="1.02"/><rect x="26" y="46" width="1" height="1.02"/><rect x="28" y="46" width="1" height="1.02"/><rect x="31" y="46" width="3" height="1.02"/><rect x="35" y="46" width="1" height="1.02"/><rect x="38" y="46" width="2" height="1.02"/><rect x="41" y="46" width="1" height="1.02"/><rect x="43" y="46" width="1" height="1.02"/><rect x="46" y="46" width="1" height="1.02"/><rect x="48" y="46" width="1" height="1.02"/><rect x="0" y="47" width="1" height="1.02"/><rect x="6" y="47" width="1" height="1.02"/><rect x="9" y="47" width="1" height="1.02"/><rect x="11" y="47" width="1" height="1.02"/><rect x="13" y="47" width="5" height="1.02"/><rect x="19" y="47" width="2" height="1.02"/><rect x="25" y="47" width="3" height="1.02"/><rect x="30" y="47" width="2" height="1.02"/><rect x="34" y="47" width="1" height="1.02"/><rect x="36" y="47" width="1" height="1.02"/><rect x="38" y="47" width="2" height="1.02"/><rect x="43" y="47" width="6" height="1.02"/><rect x="0" y="48" width="7" height="1.02"/><rect x="8" y="48" width="1" height="1.02"/><rect x="10" y="48" width="2" height="1.02"/><rect x="14" y="48" width="2" height="1.02"/><rect x="18" y="48" width="3" height="1.02"/><rect x="22" y="48" width="1" height="1.02"/><rect x="25" y="48" width="1" height="1.02"/><rect x="27" y="48" width="1" height="1.02"/><rect x="30" y="48" width="2" height="1.02"/><rect x="33" y="48" width="1" height="1.02"/><rect x="39" y="48" width="2" height="1.02"/><rect x="42" y="48" width="1" height="1.02"/><rect x="45" y="48" width="1" height="1.02"/><rect x="47" y="48" width="1" height="1.02"/></svg>
<svg class="abs" style="left:0;top:0;width:0;height:0"><defs>
<symbol id="hand" viewBox="6 3.5 19 30">
<g stroke-linejoin="miter">
<path d="M11.8 6 Q13 4.5 14.2 6 L14.2 10.3 L17.3 10.3 L17.6 11.2 L20.5 11.2 L20.8 12.5 L22.5 12.5 L23.6 14 L23.6 20.5 L22.6 21.5 L22.2 24.5 L21.7 26.3 L12.3 26.3 L12.2 24.5 L8 17.5 L7.3 16.3 L7.3 14.6 L9.6 14.6 L11.5 16 Z" fill="#fff" stroke="#fff" stroke-width="2.6"/>
<rect x="12.3" y="26.3" width="9.5" height="5.4" fill="#fff" stroke="#fff" stroke-width="2.6"/>
<path d="M11.8 6 Q13 4.5 14.2 6 L14.2 10.3 L17.3 10.3 L17.6 11.2 L20.5 11.2 L20.8 12.5 L22.5 12.5 L23.6 14 L23.6 20.5 L22.6 21.5 L22.2 24.5 L21.7 26.3 L12.3 26.3 L12.2 24.5 L8 17.5 L7.3 16.3 L7.3 14.6 L9.6 14.6 L11.5 16 Z" fill="#fff" stroke="#111" stroke-width="1.1"/>
<path d="M14.2 10.3 V14.6 M17.4 11.2 V14.6 M20.5 12.5 V15.6 M11.7 15.6 V18.5" fill="none" stroke="#111" stroke-width="1.1"/>
<rect x="12.3" y="26.3" width="9.5" height="5.4" fill="#fcc52f" stroke="#111" stroke-width="1.1"/>
<rect x="18" y="28.1" width="1.9" height="1.9" fill="#111"/>
</g></symbol></defs></svg>
<!-- dots annotation circle -->
<svg class="abs" style="left:1840px;top:10px;width:62px;height:62px" viewBox="0 0 62 62"><circle cx="30.6" cy="30.4" r="24.8" fill="none" stroke="#fbc02d" stroke-width="3"/></svg>
<!-- menu -->
<div class="abs" style="left:1577px;top:67px;width:326px;height:146px;border:3px solid #fcc233;border-radius:11px;background:#fff;box-shadow:0 6px 12px rgba(0,0,0,0.18), inset 0 0 7px 3px rgba(252,194,51,0.30)"></div>
<div class="abs" style="left:1583px;top:77px;width:314px;height:65px;border:3px solid #fcc233;border-radius:11px;background:#f3f3f3;box-shadow:inset 0 0 6px 2px rgba(252,194,51,0.26)"></div>
<svg class="abs" style="left:1600px;top:95px;width:30px;height:30px;fill:#1d1d1d" viewBox="0 0 24 24"><path d="M12 2C6.48 2 2 6.48 2 12s4.48 10 10 10 10-4.48 10-10S17.52 2 12 2zm0 3c1.66 0 3 1.34 3 3s-1.34 3-3 3-3-1.34-3-3 1.34-3 3-3zm0 14.2c-2.5 0-4.71-1.28-6-3.22.03-1.99 4-3.08 6-3.08 1.99 0 5.97 1.09 6 3.08-1.29 1.94-3.5 3.22-6 3.22z"/></svg>
<div class="txt" id="macc" style="left:1650px;top:97px;font-size:20px;line-height:24px;color:#1d1d1d;letter-spacing:0.4px">Account</div>
<svg class="abs" style="left:1600px;top:155px;width:30px;height:30px;fill:#1d1d1d" viewBox="0 0 24 24"><path d="M10.09 15.59L11.5 17l5-5-5-5-1.41 1.41L12.67 11H3v2h9.67l-2.58 2.59zM19 3H5c-1.11 0-2 .9-2 2v4h2V5h14v14H5v-4H3v4c0 1.1.89 2 2 2h14c1.1 0 2-.9 2-2V5c0-1.1-.9-2-2-2z"/></svg>
<div class="txt" id="mlog" style="left:1650px;top:157px;font-size:20px;line-height:24px;color:#1d1d1d;letter-spacing:0.4px">Logout</div>
<!-- badges -->
<div class="abs" style="left:1822px;top:1px;width:30px;height:36px;border:3px solid #fcc233;border-radius:9px;background:#fff;color:#111;font-size:27px;line-height:30px;text-align:center">1</div>
<div class="abs" style="left:1601px;top:45px;width:30px;height:35px;border:3px solid #fcc233;border-radius:9px;background:#fff;color:#111;font-size:27px;line-height:32px;text-align:center">2</div>
<svg class="abs" style="left:1861px;top:50.5px;width:19px;height:30px"><use href="#hand"/></svg>
<svg class="abs" style="left:1751px;top:95.5px;width:19px;height:30px"><use href="#hand"/></svg>

</body></html>
